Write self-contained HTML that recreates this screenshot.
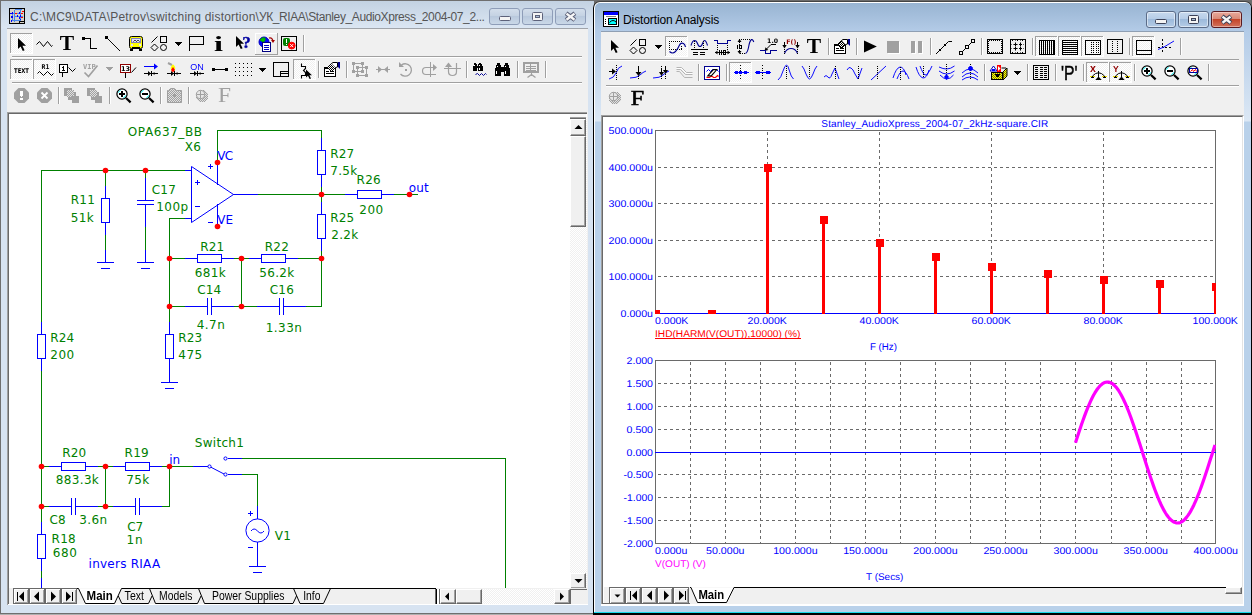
<!DOCTYPE html><html><head><meta charset="utf-8"><title>MC9</title><style>
html,body{margin:0;padding:0}
body{width:1252px;height:615px;position:relative;overflow:hidden;background:#6c6c6c;font-family:"Liberation Sans",sans-serif}
div,svg{position:absolute;box-sizing:border-box}
svg{left:0;top:0;shape-rendering:crispEdges}
.tt{font-size:12px;white-space:nowrap;line-height:16px}
.cb{border:1px solid #8a98b0;border-radius:3px}
.tab{font-size:12px;white-space:nowrap;line-height:14px;color:#000;letter-spacing:-0.35px}
.hatch{background-image:conic-gradient(#fff 25%,#f0f0f0 0 50%,#fff 0 75%,#f0f0f0 0);background-size:2px 2px}
.sbb{background:#f0f0f0;border:1px solid;border-color:#fff #696969 #696969 #fff;box-shadow:inset -1px -1px 0 #a0a0a0}
</style></head><body>
<div style="left:0;top:0;width:594px;height:614px;background:#6f6f6f"></div>
<div style="left:1px;top:1px;width:593px;height:612px;background:linear-gradient(#c3d2e2,#dbe6f3 27px,#d7e3f1 28px)"></div>
<div style="left:0;top:614px;width:594px;height:1px;background:#b0b0b0"></div>
<div class="tt" style="left:30px;top:8.5px;color:#555;letter-spacing:-0.09px" id="lt"><span style="letter-spacing:0.22px">C:\MC9\DATA\Petrov\switching distortion\</span><span style="letter-spacing:-0.44px">УК_RIAA\</span><span style="letter-spacing:-0.39px">Stanley_AudioXpress_2004-07_2...</span></div>
<div class="cb" style="left:489px;top:8px;width:31px;height:17px;border-color:#8e9db8;background:linear-gradient(#d3deeb,#c3d1e2 50%,#b9c9dd 50%,#cad8e8)"></div>
<div class="cb" style="left:522px;top:8px;width:31px;height:17px;border-color:#8e9db8;background:linear-gradient(#d3deeb,#c3d1e2 50%,#b9c9dd 50%,#cad8e8)"></div>
<div class="cb" style="left:555px;top:8px;width:31px;height:17px;border-color:#8e9db8;background:linear-gradient(#d3deeb,#c3d1e2 50%,#b9c9dd 50%,#cad8e8)"></div>
<div style="left:7px;top:28px;width:581px;height:577px;background:#f0f0f0;border-top:1px solid #a0a4aa"></div>
<div style="left:7px;top:604px;width:581px;height:1px;background:#fff"></div>
<div style="left:7px;top:112px;width:580px;height:493px;background:#fff;border-left:1px solid #a0a0a0;border-top:1px solid #a0a0a0"></div>
<div style="left:8px;top:113px;width:579px;height:491px;background:#fff;border-left:1px solid #696969;border-top:1px solid #696969"></div>
<div style="left:593px;top:1px;width:659px;height:614px;background:linear-gradient(#4a4a4a,#000 6px);border-radius:7px 7px 0 0"></div>
<div style="left:594px;top:2px;width:657px;height:611px;background:#fff;border-radius:6px 6px 0 0"></div>
<div style="left:595px;top:3px;width:656px;height:610px;background:linear-gradient(#98b4d2 0px,#b3cbe7 28px,#dce8f5 118px,#b9d1ea 119px);border-radius:5px 5px 0 0"></div>
<div style="left:594px;top:612px;width:657px;height:1px;background:#19d9ea"></div>
<div class="tt" style="left:623px;top:12px;color:#000;letter-spacing:-0.1px" id="rt">Distortion Analysis</div>
<div class="cb" style="left:1146px;top:11px;width:30px;height:17px;border-color:#5b6c88;background:linear-gradient(#c7d9ee,#b4cbe6 50%,#9dbadb 50%,#b5cce6);box-shadow:inset 0 0 0 1px rgba(255,255,255,.5)"></div>
<div class="cb" style="left:1178px;top:11px;width:31px;height:17px;border-color:#5b6c88;background:linear-gradient(#c7d9ee,#b4cbe6 50%,#9dbadb 50%,#b5cce6);box-shadow:inset 0 0 0 1px rgba(255,255,255,.5)"></div>
<div class="cb" style="left:1211px;top:11px;width:31px;height:17px;border-color:#5a1a20;background:linear-gradient(#e9a99c,#d98a78 45%,#c4452a 50%,#d2725c);box-shadow:inset 0 0 0 1px rgba(255,255,255,.4)"></div>
<div style="left:601px;top:31px;width:643px;height:575px;background:#f0f0f0;border-top:1px solid #8f9fb3"></div>
<div style="left:601px;top:605px;width:643px;height:1px;background:#fff"></div>
<div style="left:601px;top:115px;width:643px;height:491px;background:#fff;border-left:1px solid #a0a0a0;border-top:1px solid #a0a0a0;border-right:1px solid #fff"></div>
<div style="left:602px;top:116px;width:641px;height:489px;background:#fff;border-left:1px solid #696969;border-top:1px solid #696969;border-right:1px solid #e3e3e3"></div>
<svg width="1252" height="615" style="font-family:'DejaVu Sans',sans-serif;font-size:12px">
<rect x="217" y="130" width="105" height="1" fill="#008000"/>
<rect x="217" y="130" width="1" height="33" fill="#008000"/>
<rect x="321" y="130" width="1" height="9" fill="#008000"/>
<rect x="321" y="186" width="1" height="17" fill="#008000"/>
<rect x="321" y="250" width="1" height="9" fill="#008000"/>
<rect x="257" y="194" width="89" height="1" fill="#008000"/>
<rect x="393" y="194" width="25" height="1" fill="#008000"/>
<rect x="41" y="170" width="145" height="1" fill="#008000"/>
<rect x="41" y="170" width="1" height="153" fill="#008000"/>
<rect x="41" y="370" width="1" height="153" fill="#008000"/>
<rect x="41" y="570" width="1" height="9" fill="#008000"/>
<rect x="105" y="170" width="1" height="17" fill="#008000"/>
<rect x="105" y="234" width="1" height="17" fill="#008000"/>
<rect x="145" y="170" width="1" height="9" fill="#008000"/>
<rect x="145" y="226" width="1" height="25" fill="#008000"/>
<rect x="169" y="218" width="17" height="1" fill="#008000"/>
<rect x="169" y="218" width="1" height="105" fill="#008000"/>
<rect x="169" y="258" width="17" height="1" fill="#008000"/>
<rect x="233" y="258" width="17" height="1" fill="#008000"/>
<rect x="297" y="258" width="25" height="1" fill="#008000"/>
<rect x="169" y="306" width="17" height="1" fill="#008000"/>
<rect x="233" y="306" width="25" height="1" fill="#008000"/>
<rect x="305" y="306" width="17" height="1" fill="#008000"/>
<rect x="241" y="258" width="1" height="49" fill="#008000"/>
<rect x="321" y="258" width="1" height="49" fill="#008000"/>
<rect x="41" y="466" width="9" height="1" fill="#008000"/>
<rect x="97" y="466" width="17" height="1" fill="#008000"/>
<rect x="161" y="466" width="33" height="1" fill="#008000"/>
<rect x="41" y="506" width="9" height="1" fill="#008000"/>
<rect x="97" y="506" width="17" height="1" fill="#008000"/>
<rect x="161" y="506" width="9" height="1" fill="#008000"/>
<rect x="105" y="466" width="1" height="41" fill="#008000"/>
<rect x="169" y="466" width="1" height="41" fill="#008000"/>
<rect x="241" y="458" width="265" height="1" fill="#008000"/>
<rect x="505" y="458" width="1" height="130" fill="#008000"/>
<rect x="241" y="474" width="17" height="1" fill="#008000"/>
<rect x="257" y="474" width="1" height="33" fill="#008000"/>
<rect x="217" y="162" width="1" height="23" fill="#0000ff"/>
<rect x="217" y="204" width="1" height="23" fill="#0000ff"/>
<rect x="185" y="170" width="7" height="1" fill="#0000ff"/>
<rect x="185" y="218" width="7" height="1" fill="#0000ff"/>
<path d="M191.5 166.5 L191.5 222.5 L233.5 194.5 Z" fill="none" stroke="#0000ff" stroke-width="1" shape-rendering="auto"/>
<rect x="233" y="194" width="25" height="1" fill="#0000ff"/>
<rect x="321" y="138" width="1" height="13" fill="#0000ff"/>
<rect x="317.5" y="150.5" width="8" height="24" fill="none" stroke="#0000ff" stroke-width="1"/>
<rect x="321" y="174" width="1" height="13" fill="#0000ff"/>
<rect x="321" y="202" width="1" height="13" fill="#0000ff"/>
<rect x="317.5" y="214.5" width="8" height="24" fill="none" stroke="#0000ff" stroke-width="1"/>
<rect x="321" y="238" width="1" height="13" fill="#0000ff"/>
<rect x="345" y="194" width="13" height="1" fill="#0000ff"/>
<rect x="357.5" y="190.5" width="24" height="8" fill="none" stroke="#0000ff" stroke-width="1"/>
<rect x="381" y="194" width="13" height="1" fill="#0000ff"/>
<rect x="41" y="322" width="1" height="13" fill="#0000ff"/>
<rect x="37.5" y="334.5" width="8" height="24" fill="none" stroke="#0000ff" stroke-width="1"/>
<rect x="41" y="358" width="1" height="13" fill="#0000ff"/>
<rect x="41" y="522" width="1" height="13" fill="#0000ff"/>
<rect x="37.5" y="534.5" width="8" height="24" fill="none" stroke="#0000ff" stroke-width="1"/>
<rect x="41" y="558" width="1" height="13" fill="#0000ff"/>
<rect x="41" y="578" width="1" height="10" fill="#0000ff"/>
<rect x="105" y="186" width="1" height="13" fill="#0000ff"/>
<rect x="101.5" y="198.5" width="8" height="24" fill="none" stroke="#0000ff" stroke-width="1"/>
<rect x="105" y="222" width="1" height="13" fill="#0000ff"/>
<rect x="105" y="250" width="1" height="13" fill="#0000ff"/>
<rect x="97" y="262" width="17" height="1" fill="#0000ff"/>
<rect x="101" y="268" width="9" height="1" fill="#0000ff"/>
<rect x="145" y="178" width="1" height="23" fill="#0000ff"/>
<rect x="137" y="200" width="17" height="1" fill="#0000ff"/>
<rect x="137" y="204" width="17" height="1" fill="#0000ff"/>
<rect x="145" y="204" width="1" height="23" fill="#0000ff"/>
<rect x="145" y="250" width="1" height="13" fill="#0000ff"/>
<rect x="137" y="262" width="17" height="1" fill="#0000ff"/>
<rect x="141" y="268" width="9" height="1" fill="#0000ff"/>
<rect x="169" y="322" width="1" height="13" fill="#0000ff"/>
<rect x="165.5" y="334.5" width="8" height="24" fill="none" stroke="#0000ff" stroke-width="1"/>
<rect x="169" y="358" width="1" height="13" fill="#0000ff"/>
<rect x="169" y="370" width="1" height="13" fill="#0000ff"/>
<rect x="161" y="382" width="17" height="1" fill="#0000ff"/>
<rect x="165" y="388" width="9" height="1" fill="#0000ff"/>
<rect x="185" y="258" width="13" height="1" fill="#0000ff"/>
<rect x="197.5" y="254.5" width="24" height="8" fill="none" stroke="#0000ff" stroke-width="1"/>
<rect x="221" y="258" width="13" height="1" fill="#0000ff"/>
<rect x="249" y="258" width="13" height="1" fill="#0000ff"/>
<rect x="261.5" y="254.5" width="24" height="8" fill="none" stroke="#0000ff" stroke-width="1"/>
<rect x="285" y="258" width="13" height="1" fill="#0000ff"/>
<rect x="185" y="306" width="23" height="1" fill="#0000ff"/>
<rect x="207" y="298" width="1" height="17" fill="#0000ff"/>
<rect x="211" y="298" width="1" height="17" fill="#0000ff"/>
<rect x="211" y="306" width="23" height="1" fill="#0000ff"/>
<rect x="257" y="306" width="23" height="1" fill="#0000ff"/>
<rect x="279" y="298" width="1" height="17" fill="#0000ff"/>
<rect x="283" y="298" width="1" height="17" fill="#0000ff"/>
<rect x="283" y="306" width="23" height="1" fill="#0000ff"/>
<rect x="49" y="466" width="13" height="1" fill="#0000ff"/>
<rect x="61.5" y="462.5" width="24" height="8" fill="none" stroke="#0000ff" stroke-width="1"/>
<rect x="85" y="466" width="13" height="1" fill="#0000ff"/>
<rect x="113" y="466" width="13" height="1" fill="#0000ff"/>
<rect x="125.5" y="462.5" width="24" height="8" fill="none" stroke="#0000ff" stroke-width="1"/>
<rect x="149" y="466" width="13" height="1" fill="#0000ff"/>
<rect x="49" y="506" width="23" height="1" fill="#0000ff"/>
<rect x="71" y="498" width="1" height="17" fill="#0000ff"/>
<rect x="75" y="498" width="1" height="17" fill="#0000ff"/>
<rect x="75" y="506" width="23" height="1" fill="#0000ff"/>
<rect x="113" y="506" width="23" height="1" fill="#0000ff"/>
<rect x="135" y="498" width="1" height="17" fill="#0000ff"/>
<rect x="139" y="498" width="1" height="17" fill="#0000ff"/>
<rect x="139" y="506" width="23" height="1" fill="#0000ff"/>
<rect x="193" y="466" width="15" height="1" fill="#0000ff"/>
<g shape-rendering="auto" fill="#fff" stroke="#0000ff" stroke-width="1"><path d="M210.5 467 L224 474" fill="none"/><circle cx="209.5" cy="466.5" r="1.6"/><circle cx="225.5" cy="458.5" r="1.6"/><circle cx="225.5" cy="474.5" r="1.6"/></g>
<rect x="228" y="458" width="14" height="1" fill="#0000ff"/>
<rect x="228" y="474" width="14" height="1" fill="#0000ff"/>
<rect x="257" y="506" width="1" height="13" fill="#0000ff"/>
<rect x="257" y="542" width="1" height="25" fill="#0000ff"/>
<rect x="249" y="566" width="17" height="1" fill="#0000ff"/>
<rect x="253" y="572" width="9" height="1" fill="#0000ff"/>
<g shape-rendering="auto" fill="none" stroke="#0000ff" stroke-width="1"><circle cx="257.5" cy="530.5" r="11.6"/><path d="M251 531 q3 -4 6.5 0 t6.5 0"/></g>
<rect x="208" y="166" width="5" height="1" fill="#0000ff"/>
<rect x="210" y="164" width="1" height="5" fill="#0000ff"/>
<rect x="195" y="182" width="5" height="1" fill="#0000ff"/>
<rect x="197" y="180" width="1" height="5" fill="#0000ff"/>
<rect x="195" y="206" width="5" height="1" fill="#0000ff"/>
<rect x="208" y="222" width="5" height="1" fill="#0000ff"/>
<rect x="248" y="513" width="5" height="1" fill="#0000ff"/>
<rect x="250" y="511" width="1" height="5" fill="#0000ff"/>
<rect x="248" y="547" width="5" height="1" fill="#0000ff"/>
<circle cx="105.5" cy="170.5" r="2.8" fill="#ff0000" shape-rendering="auto"/>
<circle cx="145.5" cy="170.5" r="2.8" fill="#ff0000" shape-rendering="auto"/>
<circle cx="217.5" cy="162.5" r="2.8" fill="#ff0000" shape-rendering="auto"/>
<circle cx="217.5" cy="226.5" r="2.8" fill="#ff0000" shape-rendering="auto"/>
<circle cx="321.5" cy="194.5" r="2.8" fill="#ff0000" shape-rendering="auto"/>
<circle cx="409.5" cy="194.5" r="2.8" fill="#ff0000" shape-rendering="auto"/>
<circle cx="169.5" cy="258.5" r="2.8" fill="#ff0000" shape-rendering="auto"/>
<circle cx="241.5" cy="258.5" r="2.8" fill="#ff0000" shape-rendering="auto"/>
<circle cx="321.5" cy="258.5" r="2.8" fill="#ff0000" shape-rendering="auto"/>
<circle cx="169.5" cy="306.5" r="2.8" fill="#ff0000" shape-rendering="auto"/>
<circle cx="241.5" cy="306.5" r="2.8" fill="#ff0000" shape-rendering="auto"/>
<circle cx="41.5" cy="466.5" r="2.8" fill="#ff0000" shape-rendering="auto"/>
<circle cx="105.5" cy="466.5" r="2.8" fill="#ff0000" shape-rendering="auto"/>
<circle cx="169.5" cy="466.5" r="2.8" fill="#ff0000" shape-rendering="auto"/>
<circle cx="41.5" cy="506.5" r="2.8" fill="#ff0000" shape-rendering="auto"/>
<circle cx="105.5" cy="506.5" r="2.8" fill="#ff0000" shape-rendering="auto"/>
<text x="127.8" y="136" fill="#008000" textLength="74.2" lengthAdjust="spacing">OPA637_BB</text>
<text x="184.79999999999998" y="151" fill="#008000" textLength="16" lengthAdjust="spacing">X6</text>
<text x="70.8" y="204" fill="#008000" textLength="24" lengthAdjust="spacing">R11</text>
<text x="70.8" y="222" fill="#008000" textLength="23" lengthAdjust="spacing">51k</text>
<text x="151.79999999999998" y="194" fill="#008000" textLength="24" lengthAdjust="spacing">C17</text>
<text x="156.2" y="211" fill="#008000" textLength="32" lengthAdjust="spacing">100p</text>
<text x="330.2" y="158" fill="#008000" textLength="24" lengthAdjust="spacing">R27</text>
<text x="330.2" y="175" fill="#008000" textLength="27" lengthAdjust="spacing">7.5k</text>
<text x="356.59999999999997" y="184" fill="#008000" textLength="24" lengthAdjust="spacing">R26</text>
<text x="359.2" y="214" fill="#008000" textLength="24" lengthAdjust="spacing">200</text>
<text x="330.2" y="222" fill="#008000" textLength="24" lengthAdjust="spacing">R25</text>
<text x="331.2" y="239" fill="#008000" textLength="27" lengthAdjust="spacing">2.2k</text>
<text x="200.2" y="251" fill="#008000" textLength="24" lengthAdjust="spacing">R21</text>
<text x="194.79999999999998" y="277" fill="#008000" textLength="31" lengthAdjust="spacing">681k</text>
<text x="264.8" y="251" fill="#008000" textLength="24" lengthAdjust="spacing">R22</text>
<text x="259.2" y="277" fill="#008000" textLength="35" lengthAdjust="spacing">56.2k</text>
<text x="197.2" y="294" fill="#008000" textLength="24" lengthAdjust="spacing">C14</text>
<text x="196.79999999999998" y="329" fill="#008000" textLength="28" lengthAdjust="spacing">4.7n</text>
<text x="269.8" y="294" fill="#008000" textLength="24" lengthAdjust="spacing">C16</text>
<text x="265.8" y="332" fill="#008000" textLength="36" lengthAdjust="spacing">1.33n</text>
<text x="50.2" y="342" fill="#008000" textLength="24" lengthAdjust="spacing">R24</text>
<text x="50.2" y="359" fill="#008000" textLength="24" lengthAdjust="spacing">200</text>
<text x="178.2" y="342" fill="#008000" textLength="24" lengthAdjust="spacing">R23</text>
<text x="178.2" y="359" fill="#008000" textLength="24" lengthAdjust="spacing">475</text>
<text x="194.79999999999998" y="447" fill="#008000" textLength="49" lengthAdjust="spacing">Switch1</text>
<text x="62.2" y="457" fill="#008000" textLength="24" lengthAdjust="spacing">R20</text>
<text x="55.800000000000004" y="484" fill="#008000" textLength="43" lengthAdjust="spacing">883.3k</text>
<text x="124.60000000000001" y="457" fill="#008000" textLength="24" lengthAdjust="spacing">R19</text>
<text x="126.2" y="484" fill="#008000" textLength="23" lengthAdjust="spacing">75k</text>
<text x="49.6" y="524" fill="#008000" textLength="16" lengthAdjust="spacing">C8</text>
<text x="79.2" y="524" fill="#008000" textLength="28" lengthAdjust="spacing">3.6n</text>
<text x="127.2" y="531" fill="#008000" textLength="16" lengthAdjust="spacing">C7</text>
<text x="126.60000000000001" y="544" fill="#008000" textLength="16" lengthAdjust="spacing">1n</text>
<text x="51.6" y="543" fill="#008000" textLength="24" lengthAdjust="spacing">R18</text>
<text x="52.800000000000004" y="557" fill="#008000" textLength="24" lengthAdjust="spacing">680</text>
<text x="274.8" y="540" fill="#008000" textLength="16" lengthAdjust="spacing">V1</text>
<text x="217.2" y="160" fill="#0000ff" textLength="16" lengthAdjust="spacing">VC</text>
<text x="217.2" y="224" fill="#0000ff" textLength="16" lengthAdjust="spacing">VE</text>
<text x="408.8" y="192" fill="#0000ff" textLength="20" lengthAdjust="spacing">out</text>
<text x="169.2" y="464" fill="#0000ff" textLength="11" lengthAdjust="spacing">in</text>
<text x="88.60000000000001" y="568" fill="#0000ff" textLength="71.5" lengthAdjust="spacing">invers RIAA</text>
</svg>
<svg width="1252" height="615" style="font-family:'Liberation Sans',sans-serif;font-size:9.8px;text-rendering:geometricPrecision">
<path d="M658 167.5 H1215" stroke="#6a6a6a" stroke-width="1" stroke-dasharray="3 3" fill="none"/>
<path d="M658 203.5 H1215" stroke="#6a6a6a" stroke-width="1" stroke-dasharray="3 3" fill="none"/>
<path d="M658 240.5 H1215" stroke="#6a6a6a" stroke-width="1" stroke-dasharray="3 3" fill="none"/>
<path d="M658 276.5 H1215" stroke="#6a6a6a" stroke-width="1" stroke-dasharray="3 3" fill="none"/>
<path d="M767.5 132 V313" stroke="#6a6a6a" stroke-width="1" stroke-dasharray="3 3" fill="none"/>
<path d="M879.5 132 V313" stroke="#6a6a6a" stroke-width="1" stroke-dasharray="3 3" fill="none"/>
<path d="M991.5 132 V313" stroke="#6a6a6a" stroke-width="1" stroke-dasharray="3 3" fill="none"/>
<path d="M1103.5 132 V313" stroke="#6a6a6a" stroke-width="1" stroke-dasharray="3 3" fill="none"/>
<rect x="655" y="130" width="561" height="1" fill="#6a6a6a"/>
<rect x="655" y="130" width="1" height="184" fill="#6a6a6a"/>
<rect x="1215" y="130" width="1" height="184" fill="#6a6a6a"/>
<rect x="655" y="313" width="561" height="1" fill="#0000ff"/>
<clipPath id="c1"><rect x="655" y="130" width="561" height="184"/></clipPath><g clip-path="url(#c1)" fill="#ff0000">
<rect x="652" y="310" width="8" height="8"/><rect x="654" y="314" width="3" height="0"/>
<rect x="708" y="310" width="8" height="8"/><rect x="710" y="314" width="3" height="0"/>
<rect x="764" y="164" width="8" height="8"/><rect x="766" y="168" width="3" height="146"/>
<rect x="820" y="216" width="8" height="8"/><rect x="822" y="220" width="3" height="94"/>
<rect x="876" y="239" width="8" height="8"/><rect x="878" y="243" width="3" height="71"/>
<rect x="932" y="253" width="8" height="8"/><rect x="934" y="257" width="3" height="57"/>
<rect x="988" y="263" width="8" height="8"/><rect x="990" y="267" width="3" height="47"/>
<rect x="1044" y="270" width="8" height="8"/><rect x="1046" y="274" width="3" height="40"/>
<rect x="1100" y="275.5" width="8" height="8"/><rect x="1102" y="279.5" width="3" height="34.5"/>
<rect x="1156" y="279.5" width="8" height="8"/><rect x="1158" y="283.5" width="3" height="30.5"/>
<rect x="1212" y="282.5" width="8" height="8"/><rect x="1214" y="286.5" width="3" height="27.5"/>
</g>
<text x="608.6" y="133.6" fill="#0000ff" textLength="44.4" lengthAdjust="spacingAndGlyphs">500.000u</text>
<text x="608.6" y="170.6" fill="#0000ff" textLength="44.4" lengthAdjust="spacingAndGlyphs">400.000u</text>
<text x="608.6" y="206.6" fill="#0000ff" textLength="44.4" lengthAdjust="spacingAndGlyphs">300.000u</text>
<text x="608.6" y="243.6" fill="#0000ff" textLength="44.4" lengthAdjust="spacingAndGlyphs">200.000u</text>
<text x="608.6" y="279.6" fill="#0000ff" textLength="44.4" lengthAdjust="spacingAndGlyphs">100.000u</text>
<text x="620.6" y="316.6" fill="#0000ff" textLength="32.4" lengthAdjust="spacingAndGlyphs">0.000u</text>
<text x="655.0" y="324" fill="#0000ff" textLength="33.4" lengthAdjust="spacingAndGlyphs">0.000K</text>
<text x="747.5" y="324" fill="#0000ff" textLength="39.4" lengthAdjust="spacingAndGlyphs">20.000K</text>
<text x="859.5" y="324" fill="#0000ff" textLength="39.4" lengthAdjust="spacingAndGlyphs">40.000K</text>
<text x="971.5" y="324" fill="#0000ff" textLength="39.4" lengthAdjust="spacingAndGlyphs">60.000K</text>
<text x="1083.5" y="324" fill="#0000ff" textLength="39.4" lengthAdjust="spacingAndGlyphs">80.000K</text>
<text x="1192.5" y="324" fill="#0000ff" textLength="45.4" lengthAdjust="spacingAndGlyphs">100.000K</text>
<text x="655.0" y="337" fill="#ff0000" textLength="145.4" lengthAdjust="spacingAndGlyphs">IHD(HARM(V(OUT)),10000) (%)</text>
<rect x="655" y="338" width="146" height="1" fill="#ff0000"/>
<text x="870.0" y="349.8" fill="#0000ff" textLength="26.9" lengthAdjust="spacingAndGlyphs">F (Hz)</text>
<text x="934.8" y="127.2" fill="#0000ff" text-anchor="middle" font-size="10px" textLength="227" lengthAdjust="spacing">Stanley_AudioXpress_2004-07_2kHz-square.CIR</text>
<path d="M658 383.5 H1215" stroke="#6a6a6a" stroke-width="1" stroke-dasharray="3 3" fill="none"/>
<path d="M658 406.5 H1215" stroke="#6a6a6a" stroke-width="1" stroke-dasharray="3 3" fill="none"/>
<path d="M658 429.5 H1215" stroke="#6a6a6a" stroke-width="1" stroke-dasharray="3 3" fill="none"/>
<path d="M658 474.5 H1215" stroke="#6a6a6a" stroke-width="1" stroke-dasharray="3 3" fill="none"/>
<path d="M658 497.5 H1215" stroke="#6a6a6a" stroke-width="1" stroke-dasharray="3 3" fill="none"/>
<path d="M658 520.5 H1215" stroke="#6a6a6a" stroke-width="1" stroke-dasharray="3 3" fill="none"/>
<path d="M690.5 362 V543" stroke="#6a6a6a" stroke-width="1" stroke-dasharray="3 3" fill="none"/>
<path d="M725.5 362 V543" stroke="#6a6a6a" stroke-width="1" stroke-dasharray="3 3" fill="none"/>
<path d="M760.5 362 V543" stroke="#6a6a6a" stroke-width="1" stroke-dasharray="3 3" fill="none"/>
<path d="M795.5 362 V543" stroke="#6a6a6a" stroke-width="1" stroke-dasharray="3 3" fill="none"/>
<path d="M830.5 362 V543" stroke="#6a6a6a" stroke-width="1" stroke-dasharray="3 3" fill="none"/>
<path d="M865.5 362 V543" stroke="#6a6a6a" stroke-width="1" stroke-dasharray="3 3" fill="none"/>
<path d="M900.5 362 V543" stroke="#6a6a6a" stroke-width="1" stroke-dasharray="3 3" fill="none"/>
<path d="M935.5 362 V543" stroke="#6a6a6a" stroke-width="1" stroke-dasharray="3 3" fill="none"/>
<path d="M970.5 362 V543" stroke="#6a6a6a" stroke-width="1" stroke-dasharray="3 3" fill="none"/>
<path d="M1005.5 362 V543" stroke="#6a6a6a" stroke-width="1" stroke-dasharray="3 3" fill="none"/>
<path d="M1040.5 362 V543" stroke="#6a6a6a" stroke-width="1" stroke-dasharray="3 3" fill="none"/>
<path d="M1075.5 362 V543" stroke="#6a6a6a" stroke-width="1" stroke-dasharray="3 3" fill="none"/>
<path d="M1111.5 362 V543" stroke="#6a6a6a" stroke-width="1" stroke-dasharray="3 3" fill="none"/>
<path d="M1146.5 362 V543" stroke="#6a6a6a" stroke-width="1" stroke-dasharray="3 3" fill="none"/>
<path d="M1181.5 362 V543" stroke="#6a6a6a" stroke-width="1" stroke-dasharray="3 3" fill="none"/>
<rect x="655" y="360" width="561" height="1" fill="#6a6a6a"/>
<rect x="655" y="360" width="1" height="184" fill="#6a6a6a"/>
<rect x="1215" y="360" width="1" height="184" fill="#6a6a6a"/>
<rect x="655" y="543" width="561" height="1" fill="#6a6a6a"/>
<rect x="655" y="452" width="561" height="1" fill="#0000ff"/>
<clipPath id="c2"><rect x="655" y="360" width="561" height="184"/></clipPath><polyline clip-path="url(#c2)" points="1075.5,442.7 1077.0,438.1 1078.5,433.5 1080.0,428.9 1081.5,424.5 1083.0,420.3 1084.5,416.1 1086.0,412.1 1087.5,408.4 1089.0,404.8 1090.5,401.4 1092.0,398.2 1093.5,395.3 1095.0,392.7 1096.5,390.3 1098.0,388.2 1099.5,386.4 1101.0,384.9 1102.5,383.7 1104.0,382.8 1105.5,382.3 1107.0,382.0 1108.5,382.1 1110.0,382.5 1111.5,383.2 1113.0,384.2 1114.5,385.5 1116.0,387.1 1117.5,389.0 1119.0,391.2 1120.5,393.7 1122.0,396.5 1123.5,399.5 1125.0,402.7 1126.5,406.2 1128.0,409.8 1129.5,413.7 1131.0,417.8 1132.5,422.0 1134.0,426.3 1135.5,430.7 1137.0,435.3 1138.5,439.9 1140.0,444.6 1141.5,449.3 1143.0,454.1 1144.5,458.8 1146.0,463.5 1147.5,468.2 1149.0,472.7 1150.5,477.2 1152.0,481.6 1153.5,485.9 1155.0,490.0 1156.5,493.9 1158.0,497.6 1159.5,501.2 1161.0,504.5 1162.5,507.6 1164.0,510.4 1165.5,513.0 1167.0,515.3 1168.5,517.3 1170.0,519.0 1171.5,520.4 1173.0,521.5 1174.5,522.3 1176.0,522.8 1177.5,523.0 1179.0,522.9 1180.5,522.4 1182.0,521.6 1183.5,520.5 1185.0,519.1 1186.5,517.4 1188.0,515.4 1189.5,513.1 1191.0,510.6 1192.5,507.8 1194.0,504.7 1195.5,501.4 1197.0,497.9 1198.5,494.1 1200.0,490.2 1201.5,486.1 1203.0,481.9 1204.5,477.5 1206.0,473.1 1207.5,468.5 1209.0,463.8 1210.5,459.1 1212.0,454.4 1213.5,449.7 1215.0,444.9" fill="none" stroke="#ff00ff" stroke-width="3.2" stroke-linejoin="round" shape-rendering="auto"/>
<text x="626.6" y="363.6" fill="#0000ff" textLength="26.4" lengthAdjust="spacingAndGlyphs">2.000</text>
<text x="626.6" y="386.6" fill="#0000ff" textLength="26.4" lengthAdjust="spacingAndGlyphs">1.500</text>
<text x="626.6" y="409.6" fill="#0000ff" textLength="26.4" lengthAdjust="spacingAndGlyphs">1.000</text>
<text x="626.6" y="432.6" fill="#0000ff" textLength="26.4" lengthAdjust="spacingAndGlyphs">0.500</text>
<text x="626.6" y="455.6" fill="#0000ff" textLength="26.4" lengthAdjust="spacingAndGlyphs">0.000</text>
<text x="623.6" y="477.6" fill="#0000ff" textLength="29.4" lengthAdjust="spacingAndGlyphs">-0.500</text>
<text x="623.6" y="500.6" fill="#0000ff" textLength="29.4" lengthAdjust="spacingAndGlyphs">-1.000</text>
<text x="623.6" y="523.6" fill="#0000ff" textLength="29.4" lengthAdjust="spacingAndGlyphs">-1.500</text>
<text x="623.6" y="546.6" fill="#0000ff" textLength="29.4" lengthAdjust="spacingAndGlyphs">-2.000</text>
<text x="655.0" y="553.5" fill="#0000ff" textLength="32.4" lengthAdjust="spacingAndGlyphs">0.000u</text>
<text x="706.1" y="553.5" fill="#0000ff" textLength="38.4" lengthAdjust="spacingAndGlyphs">50.000u</text>
<text x="773.2" y="553.5" fill="#0000ff" textLength="44.4" lengthAdjust="spacingAndGlyphs">100.000u</text>
<text x="843.2" y="553.5" fill="#0000ff" textLength="44.4" lengthAdjust="spacingAndGlyphs">150.000u</text>
<text x="913.3" y="553.5" fill="#0000ff" textLength="44.4" lengthAdjust="spacingAndGlyphs">200.000u</text>
<text x="983.4" y="553.5" fill="#0000ff" textLength="44.4" lengthAdjust="spacingAndGlyphs">250.000u</text>
<text x="1053.5" y="553.5" fill="#0000ff" textLength="44.4" lengthAdjust="spacingAndGlyphs">300.000u</text>
<text x="1123.6" y="553.5" fill="#0000ff" textLength="44.4" lengthAdjust="spacingAndGlyphs">350.000u</text>
<text x="1193.6" y="553.5" fill="#0000ff" textLength="44.4" lengthAdjust="spacingAndGlyphs">400.000u</text>
<text x="655.0" y="567" fill="#ff00ff" textLength="50.9" lengthAdjust="spacingAndGlyphs">V(OUT) (V)</text>
<text x="866.0" y="579.6" fill="#0000ff" textLength="37.4" lengthAdjust="spacingAndGlyphs">T (Secs)</text>
</svg>
<div class="hatch" style="left:570px;top:117px;width:17px;height:472px"></div>
<div style="left:570px;top:114px;width:16px;height:5px;background:#f8f8f8;border-bottom:1px solid #696969;box-shadow:inset 0 -1px 0 #a0a0a0"></div>
<div class="sbb" style="left:570px;top:119px;width:16px;height:17px"></div>
<div class="sbb" style="left:570px;top:136px;width:16px;height:91px"></div>
<div class="sbb" style="left:570px;top:573px;width:16px;height:16px"></div>
<div style="left:9px;top:588px;width:578px;height:16px;background:#f0f0f0"></div>
<div class="hatch" style="left:440px;top:589px;width:131px;height:15px"></div>
<div style="left:570px;top:589px;width:17px;height:15px;background:#f0f0f0;border-top:1px solid #696969;border-left:1px solid #696969"></div>
<div class="sbb" style="left:440px;top:589px;width:16px;height:15px"></div>
<div class="sbb" style="left:456px;top:589px;width:26px;height:15px"></div>
<div class="sbb" style="left:554px;top:589px;width:16px;height:15px"></div>
<div style="left:13px;top:588px;width:16px;height:16px;background:#f0f0f0;border:1px solid;border-color:#696969 #696969 #696969 #696969;box-shadow:inset 1px 1px 0 #fff,inset -1px -1px 0 #a0a0a0"></div>
<div style="left:29px;top:588px;width:16px;height:16px;background:#f0f0f0;border:1px solid;border-color:#696969 #696969 #696969 #696969;box-shadow:inset 1px 1px 0 #fff,inset -1px -1px 0 #a0a0a0"></div>
<div style="left:45px;top:588px;width:16px;height:16px;background:#f0f0f0;border:1px solid;border-color:#696969 #696969 #696969 #696969;box-shadow:inset 1px 1px 0 #fff,inset -1px -1px 0 #a0a0a0"></div>
<div style="left:61px;top:588px;width:16px;height:16px;background:#f0f0f0;border:1px solid;border-color:#696969 #696969 #696969 #696969;box-shadow:inset 1px 1px 0 #fff,inset -1px -1px 0 #a0a0a0"></div>
<div style="left:603px;top:587px;width:640px;height:17px;background:#f0f0f0;border-left:1px solid #fff"></div>
<div style="left:601px;top:604px;width:643px;height:2px;background:#fff"></div>
<div style="left:603px;top:603px;width:87px;height:1px;background:#696969"></div>
<div style="left:609px;top:587px;width:16px;height:17px;background:#f0f0f0;border:1px solid #696969;box-shadow:inset 1px 1px 0 #fff,inset -1px -1px 0 #a0a0a0"></div>
<div style="left:625px;top:587px;width:16px;height:17px;background:#f0f0f0;border:1px solid #696969;box-shadow:inset 1px 1px 0 #fff,inset -1px -1px 0 #a0a0a0"></div>
<div style="left:641px;top:587px;width:16px;height:17px;background:#f0f0f0;border:1px solid #696969;box-shadow:inset 1px 1px 0 #fff,inset -1px -1px 0 #a0a0a0"></div>
<div style="left:657px;top:587px;width:16px;height:17px;background:#f0f0f0;border:1px solid #696969;box-shadow:inset 1px 1px 0 #fff,inset -1px -1px 0 #a0a0a0"></div>
<div style="left:673px;top:587px;width:16px;height:17px;background:#f0f0f0;border:1px solid #696969;box-shadow:inset 1px 1px 0 #fff,inset -1px -1px 0 #a0a0a0"></div>
<div class="sbb" style="left:1225px;top:587px;width:17px;height:7px"></div>
<svg width="1252" height="615" style="will-change:transform">
<g shape-rendering="auto" stroke="#000" stroke-width="1" fill="none">
<path d="M77 588.5 H78.5 L85.5 603.5 H114.5 L121.5 588.5" fill="#fff"/>
<path d="M121.5 588.5 H436"/>
<path d="M118.3 596 L121.8 603.5 H148.5 L152 596 M149.5 588.5 L155.5 603.5 H197.5 L201 596 M198.5 588.5 L204.5 603.5 H293 L296.5 596 M293.5 588.5 L300 603.5 H323.5 L330.5 588.5"/>
<path d="M690 587.5 H691 L697.5 602.5 H726.5 L734 587.5" fill="#fff"/><path d="M734 587.5 H1226"/>
</g>
<rect x="435" y="589" width="1" height="15" fill="#696969"/><rect x="436" y="589" width="1" height="15" fill="#000"/><rect x="437" y="589" width="2" height="15" fill="#fff"/><rect x="439" y="589" width="1" height="15" fill="#696969"/>
<g fill="#000" shape-rendering="auto">
<path d="M574.5 129 L578.5 125 L582.5 129 Z"/>
<path d="M574.5 579 L578.5 583 L582.5 579 Z"/>
<path d="M449 592.5 L445 596.5 L449 600.5 Z"/>
<path d="M560 592.5 L564 596.5 L560 600.5 Z"/>
<rect x="17" y="592" width="1" height="9"/><path d="M24 591.5 L19 596.5 L24 601.5 Z"/><path d="M39 591.5 L34 596.5 L39 601.5 Z"/><path d="M51 591.5 L56 596.5 L51 601.5 Z"/><path d="M66 591.5 L71 596.5 L66 601.5 Z"/><rect x="72" y="592" width="1" height="9"/>
<rect x="630" y="591" width="1" height="9"/><path d="M637 590.5 L632 595.5 L637 600.5 Z"/><path d="M652 590.5 L647 595.5 L652 600.5 Z"/><path d="M664 590.5 L669 595.5 L664 600.5 Z"/><path d="M679 590.5 L684 595.5 L679 600.5 Z"/><rect x="685" y="591" width="1" height="9"/>
<path d="M614.5 594.5 L617.5 597.5 L620.5 594.5 Z"/>
</g>
<g shape-rendering="auto"><rect x="499.5" y="16.5" width="11" height="4" rx="1" fill="#f4f4f4" stroke="#5d627a"/><rect x="532.5" y="12.5" width="10" height="8" rx="1" fill="#f4f4f4" stroke="#5d627a"/><rect x="535.5" y="15.5" width="4" height="2" fill="#a9bdd6" stroke="#5d627a"/><path d="M566.1 13.299999999999999 L574.9 20.099999999999998 M574.9 13.299999999999999 L566.1 20.099999999999998" stroke="#5d627a" stroke-width="4.4" stroke-linecap="butt" fill="none"/><path d="M566.5 13.6 L574.5 19.8 M574.5 13.6 L566.5 19.8" stroke="#f6f6f6" stroke-width="2.4" stroke-linecap="butt" fill="none"/></g>
<g shape-rendering="auto"><rect x="1155.5" y="19.5" width="11" height="4" rx="1" fill="#f4f4f4" stroke="#3c4258"/><rect x="1188.5" y="15.5" width="10" height="8" rx="1" fill="#f4f4f4" stroke="#3c4258"/><rect x="1191.5" y="18.5" width="4" height="2" fill="#a9bdd6" stroke="#3c4258"/><path d="M1222.1 16.3 L1230.9 23.099999999999998 M1230.9 16.3 L1222.1 23.099999999999998" stroke="#3c4258" stroke-width="4.4" stroke-linecap="butt" fill="none"/><path d="M1222.5 16.599999999999998 L1230.5 22.8 M1230.5 16.599999999999998 L1222.5 22.8" stroke="#f6f6f6" stroke-width="2.4" stroke-linecap="butt" fill="none"/></g>
<rect x="9" y="8" width="16" height="16" fill="#000"/><rect x="10" y="9" width="14" height="14" fill="#d6d2ca"/>
<g fill="#4a86e8"><rect x="14" y="10" width="1" height="12"/><rect x="20" y="10" width="1" height="10"/><rect x="11" y="13" width="12" height="1"/><rect x="12" y="20" width="9" height="1"/><rect x="15" y="16" width="8" height="1"/><rect x="12" y="14" width="1" height="7"/><rect x="15" y="9" width="7" height="1"/></g>
<g fill="#0000ff"><rect x="10" y="13" width="2" height="1"/><rect x="12" y="12" width="1" height="2"/><rect x="11" y="16" width="2" height="2"/><rect x="11" y="20" width="1" height="2"/><rect x="19" y="12" width="1" height="2"/><rect x="17" y="15" width="1" height="2"/><rect x="20" y="15" width="1" height="2"/><rect x="19" y="17" width="1" height="2"/><rect x="20" y="19" width="1" height="1"/></g>
<g fill="#ff0000"><rect x="15" y="13" width="2" height="1"/><rect x="22" y="11" width="2" height="1"/><rect x="21" y="13" width="2" height="1"/><rect x="21" y="17" width="2" height="1"/></g>
<rect x="19" y="21" width="5" height="2" fill="#000"/><rect x="20" y="22" width="4" height="1" fill="#d6d2ca"/>
<rect x="603" y="11" width="16" height="16" fill="#000"/><rect x="604" y="12" width="14" height="3" fill="#0000ff"/><rect x="604" y="15" width="14" height="11" fill="#fff"/>
<rect x="606" y="16" width="10" height="1" fill="#808080"/><rect x="608" y="18" width="9" height="7" fill="#000"/><rect x="609" y="19" width="7" height="5" fill="#00ffff"/><path d="M609.5 22.5 q3.5 -4 7 0" stroke="#000" fill="none" shape-rendering="auto"/>
<rect x="605" y="19" width="1" height="1" fill="#000"/><rect x="605" y="21" width="1" height="1" fill="#000"/><rect x="605" y="23" width="1" height="1" fill="#000"/>
<defs><pattern id="hatch" width="2" height="2" patternUnits="userSpaceOnUse"><rect width="2" height="2" fill="#fff"/><rect width="1" height="1" fill="#f0f0f0"/><rect x="1" y="1" width="1" height="1" fill="#f0f0f0"/></pattern><pattern id="hatchg" width="2" height="2" patternUnits="userSpaceOnUse"><rect width="2" height="2" fill="#a0a0a0"/><rect width="1" height="1" fill="#e0e0e0"/><rect x="1" y="1" width="1" height="1" fill="#e0e0e0"/></pattern><pattern id="hatchk" width="2" height="2" patternUnits="userSpaceOnUse"><rect width="2" height="2" fill="#fff"/><rect width="1" height="1" fill="#000"/><rect x="1" y="1" width="1" height="1" fill="#000"/></pattern><pattern id="hatchy" width="2" height="2" patternUnits="userSpaceOnUse"><rect width="2" height="2" fill="#ffff00"/><rect width="1" height="1" fill="#808000"/><rect x="1" y="1" width="1" height="1" fill="#808000"/></pattern></defs>
<rect x="12" y="56" width="570" height="1" fill="#a0a0a0"/><rect x="12" y="57" width="570" height="1" fill="#fff"/>
<rect x="12" y="82" width="570" height="1" fill="#a0a0a0"/><rect x="12" y="83" width="570" height="1" fill="#fff"/>
<rect x="10" y="33" width="23" height="21" fill="url(#hatch)"/><rect x="10" y="33" width="23" height="1" fill="#a0a0a0"/><rect x="10" y="33" width="1" height="21" fill="#a0a0a0"/><rect x="10" y="53" width="23" height="1" fill="#fff"/><rect x="32" y="33" width="1" height="21" fill="#fff"/>
<polygon points="18,38 18,49 20.6,46.6 22.8,51 24.6,50.2 22.4,45.8 26,45.8" fill="#000" shape-rendering="auto"/>
<polyline points="36.5,44.5 39.5,41.5 43.5,46.5 47.5,41.5 51.5,46.5 52.5,45.5" fill="none" stroke="#000" stroke-width="1" shape-rendering="auto"/>
<text x="67" y="50" font-family="'Liberation Serif',sans-serif" font-size="20px" font-weight="bold" fill="#000" text-anchor="middle" textLength="14.4" lengthAdjust="spacingAndGlyphs">T</text>
<rect x="82" y="37" width="3" height="3" fill="#000"/>
<path d="M85 38.5 H90.5 V48.5 H97" fill="none" stroke="#000" stroke-width="1" shape-rendering="auto" style="shape-rendering:crispEdges"/>
<rect x="105" y="36" width="3" height="3" fill="#000"/>
<path d="M107 38 L120 51" fill="none" stroke="#000" stroke-width="0.95" shape-rendering="auto"/>
<rect x="129.5" y="36.5" width="13" height="12" rx="2" fill="#ffff00" stroke="#000" shape-rendering="auto"/>
<rect x="131.5" y="38.5" width="9" height="4" fill="#e4e4f4" stroke="#8080c0" stroke-width="1"/><polyline points="133.5,41.5 134.5,40.5 135.5,40.5 136.5,41.5" fill="none" stroke="#000" stroke-width="0.9" shape-rendering="auto"/><polyline points="136.5,41.5 137.5,40.5 138.5,40.5 139.5,41.5" fill="none" stroke="#000" stroke-width="0.9" shape-rendering="auto"/><rect x="131" y="44" width="2" height="2" fill="#e0e0ff"/><rect x="139" y="44" width="2" height="2" fill="#e0e0ff"/><rect x="132" y="47" width="8" height="1" fill="#000"/><rect x="130" y="49" width="3" height="2" fill="#000"/><rect x="139" y="49" width="3" height="2" fill="#000"/>
<path d="M151.5 42.5 L157.5 36.5" fill="none" stroke="#000" stroke-width="1" shape-rendering="auto"/><rect x="160.5" y="36.5" width="6" height="6" fill="none" stroke="#000" stroke-width="1"/><path d="M154.5 44 L158 47.5 L154.5 51 L151 47.5 Z" fill="none" stroke="#000" stroke-width="1" shape-rendering="auto"/><circle cx="163.5" cy="47.5" r="3" fill="none" stroke="#000" stroke-width="1" shape-rendering="auto"/>
<rect x="175" y="42" width="7" height="1" fill="#000"/><rect x="176" y="43" width="5" height="1" fill="#000"/><rect x="177" y="44" width="3" height="1" fill="#000"/><rect x="178" y="45" width="1" height="1" fill="#000"/>
<rect x="189.5" y="36.5" width="14" height="8" fill="none" stroke="#000" stroke-width="1"/><rect x="189" y="36" width="1" height="15" fill="#000"/>
<text x="218.5" y="51" font-family="'Liberation Serif',sans-serif" font-size="22px" font-weight="bold" fill="#000" text-anchor="middle" textLength="9" lengthAdjust="spacingAndGlyphs">i</text>
<polygon points="236,36 236,47 238.6,44.6 240.8,49 242.6,48.2 240.4,43.8 244,43.8" fill="#000" shape-rendering="auto"/>
<text x="242.2" y="48" font-family="'Liberation Serif',sans-serif" font-size="17px" font-weight="bold" fill="#0000a0" text-anchor="start" stroke="#0000a0" stroke-width="0.4">?</text>
<rect x="255" y="33" width="23" height="1" fill="#fff"/><rect x="255" y="33" width="1" height="22" fill="#fff"/><rect x="255" y="54" width="23" height="1" fill="#a0a0a0"/><rect x="277" y="33" width="1" height="22" fill="#a0a0a0"/>
<circle cx="264" cy="42" r="5" fill="#0000ff" stroke="#0000c0" stroke-width="1" shape-rendering="auto"/><path d="M260 40 q2 -3 5 -2 q1 3 -2 4 z" fill="#00c000" stroke="#00a000" stroke-width="1" shape-rendering="auto"/><path d="M269 38 q3 -1 4 3" fill="none" stroke="#a00000" stroke-width="1.2" shape-rendering="auto"/><polygon points="271,40 275,40 273,43" fill="#a00000" shape-rendering="auto"/>
<rect x="262.5" y="42.5" width="8" height="9" fill="#fff" stroke="#000080" stroke-width="1"/><rect x="264" y="45" width="5" height="1" fill="#0000c0"/><rect x="264" y="47" width="5" height="1" fill="#0000c0"/><rect x="264" y="49" width="5" height="1" fill="#0000c0"/>
<rect x="281.5" y="36.5" width="15" height="14" fill="#f0f0f0" stroke="#000" stroke-width="1"/><rect x="283" y="38" width="7" height="8" rx="2" fill="#008000" shape-rendering="auto"/><rect x="286" y="39" width="1" height="4" fill="#fff"/><rect x="286" y="44" width="1" height="1" fill="#fff"/>
<circle cx="291.7" cy="45.6" r="3.4" fill="#ff0000" stroke="#ff0000" stroke-width="1" shape-rendering="auto"/><path d="M290.2 44.1 l3 3 m0 -3 l-3 3" fill="none" stroke="#fff" stroke-width="1" shape-rendering="auto"/>
<rect x="303" y="35" width="1" height="17" fill="#a0a0a0"/><rect x="304" y="35" width="1" height="17" fill="#fff"/>
<rect x="10" y="59" width="23" height="21" fill="url(#hatch)"/><rect x="10" y="59" width="23" height="1" fill="#a0a0a0"/><rect x="10" y="59" width="1" height="21" fill="#a0a0a0"/><rect x="10" y="79" width="23" height="1" fill="#fff"/><rect x="32" y="59" width="1" height="21" fill="#fff"/>
<text x="21.5" y="72.6" font-family="'DejaVu Sans',sans-serif" font-size="6.6px" font-weight="bold" fill="#000" text-anchor="middle" textLength="15" lengthAdjust="spacingAndGlyphs">TEXT</text>
<rect x="33" y="59" width="23" height="21" fill="url(#hatch)"/><rect x="33" y="59" width="23" height="1" fill="#a0a0a0"/><rect x="33" y="59" width="1" height="21" fill="#a0a0a0"/><rect x="33" y="79" width="23" height="1" fill="#fff"/><rect x="55" y="59" width="1" height="21" fill="#fff"/>
<text x="45.5" y="69.4" font-family="'DejaVu Sans Mono',sans-serif" font-size="6.5px" font-weight="bold" fill="#000" text-anchor="middle">R1</text>
<polyline points="37.5,73.5 39.5,71.5 43.5,75.5 47.5,71.5 51.5,75.5 53.5,73.5" fill="none" stroke="#000" stroke-width="1" shape-rendering="auto"/>
<rect x="59.5" y="64.5" width="8" height="8" fill="#fff" stroke="#000" stroke-width="1"/><rect x="63" y="66" width="1" height="5" fill="#000"/><rect x="62" y="67" width="1" height="1" fill="#000"/><rect x="62" y="70" width="3" height="1" fill="#000"/><rect x="62" y="73" width="1" height="4" fill="#000"/><polyline points="68.5,67.5 72.5,71.5 75.5,68.5" fill="none" stroke="#000" stroke-width="1" shape-rendering="auto"/>
<text x="83" y="68.5" font-family="'DejaVu Sans Mono',sans-serif" font-size="7px" font-weight="bold" fill="#a0a0a0" text-anchor="start">VIP</text><polyline points="84.5,72.5 88.5,76.5 97.5,65.5" fill="none" stroke="#a0a0a0" stroke-width="1.7" shape-rendering="auto"/>
<rect x="106" y="67" width="7" height="1" fill="#a0a0a0"/><rect x="107" y="68" width="5" height="1" fill="#a0a0a0"/><rect x="108" y="69" width="3" height="1" fill="#a0a0a0"/><rect x="109" y="70" width="1" height="1" fill="#a0a0a0"/>
<rect x="120.5" y="64.5" width="10" height="8" fill="#fff" stroke="#900000" stroke-width="1"/><text x="125.5" y="71" font-family="'DejaVu Sans',sans-serif" font-size="6.5px" font-weight="bold" fill="#000" text-anchor="middle">13</text><rect x="125" y="73" width="1" height="5" fill="#000"/><path d="M131.5 72.5 L136 67.5" fill="none" stroke="#000" stroke-width="1" shape-rendering="auto"/>
<rect x="144" y="66" width="13" height="1" fill="#0000ff"/><polygon points="154,63.5 158,66.5 154,69.5" fill="#0000ff" shape-rendering="auto"/><rect x="144" y="73" width="14" height="1" fill="#000"/><polygon points="148,71 151,73.5 148,76" fill="#000" shape-rendering="auto"/><rect x="151" y="71" width="1" height="5" fill="#000"/><polygon points="154.5,72 152.5,73.5 154.5,75" fill="#000" shape-rendering="auto"/>
<rect x="167" y="73" width="14" height="1" fill="#000"/><polygon points="171,71 174,73.5 171,76" fill="#000" shape-rendering="auto"/><rect x="174" y="71" width="1" height="5" fill="#000"/><polygon points="177.5,72 175.5,73.5 177.5,75" fill="#000" shape-rendering="auto"/><path d="M168 63 l4 2" fill="none" stroke="#a0a0a0" stroke-width="2" shape-rendering="auto"/><path d="M173 65 q-3 4 0 6 q3 -2 0 -6" fill="#ffff00" stroke="#ffff00" stroke-width="1.5" shape-rendering="auto"/><polygon points="173,67 175,70 173,72.5 171,70" fill="#ff0000" shape-rendering="auto"/>
<text x="197" y="69.6" font-family="'Liberation Sans',sans-serif" font-size="9px" font-weight="normal" fill="#0000ff" text-anchor="middle">ON</text><rect x="190" y="73" width="14" height="1" fill="#000"/><polygon points="194,71 197,73.5 194,76" fill="#000" shape-rendering="auto"/><rect x="197" y="71" width="1" height="5" fill="#000"/><polygon points="200.5,72 198.5,73.5 200.5,75" fill="#000" shape-rendering="auto"/>
<rect x="212" y="68" width="3" height="3" fill="#000"/><rect x="225" y="68" width="3" height="3" fill="#000"/><rect x="215" y="69" width="10" height="1" fill="#000"/>
<rect x="235" y="63" width="1" height="1" fill="#000"/>
<rect x="239" y="63" width="1" height="1" fill="#000"/>
<rect x="243" y="63" width="1" height="1" fill="#000"/>
<rect x="247" y="63" width="1" height="1" fill="#000"/>
<rect x="251" y="63" width="1" height="1" fill="#000"/>
<rect x="235" y="67" width="1" height="1" fill="#000"/>
<rect x="239" y="67" width="1" height="1" fill="#000"/>
<rect x="243" y="67" width="1" height="1" fill="#000"/>
<rect x="247" y="67" width="1" height="1" fill="#000"/>
<rect x="251" y="67" width="1" height="1" fill="#000"/>
<rect x="235" y="71" width="1" height="1" fill="#000"/>
<rect x="239" y="71" width="1" height="1" fill="#000"/>
<rect x="243" y="71" width="1" height="1" fill="#000"/>
<rect x="247" y="71" width="1" height="1" fill="#000"/>
<rect x="251" y="71" width="1" height="1" fill="#000"/>
<rect x="235" y="75" width="1" height="1" fill="#000"/>
<rect x="239" y="75" width="1" height="1" fill="#000"/>
<rect x="243" y="75" width="1" height="1" fill="#000"/>
<rect x="247" y="75" width="1" height="1" fill="#000"/>
<rect x="251" y="75" width="1" height="1" fill="#000"/>
<rect x="259" y="68" width="7" height="1" fill="#000"/><rect x="260" y="69" width="5" height="1" fill="#000"/><rect x="261" y="70" width="3" height="1" fill="#000"/><rect x="262" y="71" width="1" height="1" fill="#000"/>
<rect x="273.65" y="62.65" width="14.7" height="13.7" fill="none" stroke="#000" stroke-width="1.3"/><rect x="280.65" y="71.65" width="7.7" height="4.7" fill="none" stroke="#000" stroke-width="1.3"/><rect x="281" y="73" width="7" height="1" fill="#000"/>
<rect x="293" y="59" width="23" height="21" fill="url(#hatch)"/><rect x="293" y="59" width="23" height="1" fill="#a0a0a0"/><rect x="293" y="59" width="1" height="21" fill="#a0a0a0"/><rect x="293" y="79" width="23" height="1" fill="#fff"/><rect x="315" y="59" width="1" height="21" fill="#fff"/>
<polyline points="301.5,63.5 301.5,66.5 305.5,66.5 305.5,68.5 303.5,70.5 305.5,72.5 305.5,75.5 301.5,75.5 301.5,78.5" fill="none" stroke="#000" stroke-width="1.1" shape-rendering="auto"/><polygon points="306,69.5 306,77.5 308,75.7 309.6,79.1 311,78.5 309.4,75.3 312,75.3" fill="#000" shape-rendering="auto"/>
<rect x="318" y="61" width="1" height="17" fill="#a0a0a0"/><rect x="319" y="61" width="1" height="17" fill="#fff"/>
<rect x="324.5" y="67.5" width="11" height="9" fill="#fff" stroke="#000" stroke-width="1"/><rect x="324" y="67" width="12" height="2" fill="#000"/><rect x="326" y="71" width="3" height="1" fill="#000"/><rect x="330" y="71" width="4" height="1" fill="#000"/><rect x="326" y="73" width="8" height="1" fill="#000"/><polygon points="327.5,67.5 331.5,63.5 335.5,67.5 331.5,71.5" fill="url(#hatchk)" stroke="#000" stroke-width="1" shape-rendering="auto"/><path d="M331.5 63.5 L333 62.5 H337.5 V67 L335.5 67.5" fill="#fff" stroke="#000" stroke-width="1" shape-rendering="auto"/><polygon points="338,62 340,62 340,69 338,67" fill="#000090" shape-rendering="auto"/>
<rect x="346" y="61" width="1" height="17" fill="#a0a0a0"/><rect x="347" y="61" width="1" height="17" fill="#fff"/>
<rect x="353.5" y="63.5" width="9" height="8" fill="none" stroke="#a0a0a0" stroke-width="1"/><rect x="357.5" y="67.5" width="9" height="8" fill="none" stroke="#a0a0a0" stroke-width="1"/><rect x="352" y="62" width="3" height="3" fill="#a0a0a0"/><rect x="361" y="62" width="3" height="3" fill="#a0a0a0"/><rect x="352" y="70" width="3" height="3" fill="#a0a0a0"/><rect x="361" y="70" width="3" height="3" fill="#a0a0a0"/><rect x="356" y="66" width="3" height="3" fill="#a0a0a0"/><rect x="365" y="66" width="3" height="3" fill="#a0a0a0"/><rect x="356" y="74" width="3" height="3" fill="#a0a0a0"/><rect x="365" y="74" width="3" height="3" fill="#a0a0a0"/>
<rect x="376" y="69" width="14" height="1" fill="#a0a0a0"/><polygon points="378,66 382,69.5 378,73" fill="#a0a0a0" shape-rendering="auto"/><polygon points="388,66 384,69.5 388,73" fill="#a0a0a0" shape-rendering="auto"/>
<path d="M401.5 65 A6.2 6.2 0 1 1 400.5 74" fill="none" stroke="#a0a0a0" stroke-width="1.3" shape-rendering="auto"/><polygon points="399,62 399,67 404,67" fill="#a0a0a0" shape-rendering="auto"/><rect x="405" y="69" width="2" height="2" fill="#a0a0a0"/>
<path d="M433 67.5 H426 q-3.5 0 -3.5 3.5 q0 3.5 3.5 3.5 H436" fill="none" stroke="#a0a0a0" stroke-width="1.2" shape-rendering="auto"/><rect x="430" y="62" width="1" height="15" fill="#a0a0a0"/><polygon points="433,64 437,67.5 433,71" fill="#a0a0a0" shape-rendering="auto"/>
<path d="M448.5 66 V71.5 q0 4 4 4 q4 0 4 -4 V63" fill="none" stroke="#a0a0a0" stroke-width="1.2" shape-rendering="auto"/><rect x="444" y="68" width="17" height="1" fill="#a0a0a0"/><polygon points="445,67 448.5,62.5 452,67" fill="#a0a0a0" shape-rendering="auto"/>
<rect x="466" y="61" width="1" height="17" fill="#a0a0a0"/><rect x="467" y="61" width="1" height="17" fill="#fff"/>
<g transform="translate(473,63)"><g transform="scale(0.68)"><rect x="2" y="0" width="3" height="2" fill="#000"/><rect x="9" y="0" width="3" height="2" fill="#000"/><rect x="1" y="2" width="5" height="3" fill="#000"/><rect x="8" y="2" width="5" height="3" fill="#000"/><rect x="0" y="5" width="6" height="7" fill="#000"/><rect x="8" y="5" width="6" height="7" fill="#000"/><rect x="6" y="4" width="2" height="4" fill="#000"/><rect x="2" y="3" width="1" height="1" fill="#fff"/><rect x="9" y="3" width="1" height="1" fill="#fff"/><rect x="1" y="7" width="1" height="3" fill="#fff"/><rect x="9" y="7" width="1" height="3" fill="#fff"/></g></g><polyline points="475.5,74.5 477.5,73.5 479.5,75.5 481.5,73.5 483.5,75.5 485.5,73.5 486.5,74.5" fill="none" stroke="#000090" stroke-width="1" shape-rendering="auto"/>
<g transform="translate(495,63)"><g transform="scale(1.08)"><rect x="2" y="0" width="3" height="2" fill="#000"/><rect x="9" y="0" width="3" height="2" fill="#000"/><rect x="1" y="2" width="5" height="3" fill="#000"/><rect x="8" y="2" width="5" height="3" fill="#000"/><rect x="0" y="5" width="6" height="7" fill="#000"/><rect x="8" y="5" width="6" height="7" fill="#000"/><rect x="6" y="4" width="2" height="4" fill="#000"/><rect x="2" y="3" width="1" height="1" fill="#fff"/><rect x="9" y="3" width="1" height="1" fill="#fff"/><rect x="1" y="7" width="1" height="3" fill="#fff"/><rect x="9" y="7" width="1" height="3" fill="#fff"/></g></g>
<rect x="517" y="61" width="1" height="17" fill="#a0a0a0"/><rect x="518" y="61" width="1" height="17" fill="#fff"/>
<rect x="524.0" y="63.0" width="14" height="9" fill="none" stroke="#a0a0a0" stroke-width="2"/><rect x="526" y="66" width="10" height="1" fill="#a0a0a0"/><rect x="526" y="68" width="10" height="1" fill="#a0a0a0"/><rect x="526" y="70" width="10" height="1" fill="#a0a0a0"/><rect x="530" y="63" width="1" height="10" fill="#a0a0a0"/><polyline points="527.5,77.5 531.5,74.5 535.5,77.5" fill="none" stroke="#a0a0a0" stroke-width="1.4" shape-rendering="auto"/><rect x="531" y="73" width="1" height="3" fill="#a0a0a0"/>
<rect x="545" y="61" width="1" height="17" fill="#a0a0a0"/><rect x="546" y="61" width="1" height="17" fill="#fff"/>
<polygon points="18.5,88 24.5,88 29,92.5 29,98.5 24.5,103 18.5,103 14,98.5 14,92.5" fill="#a0a0a0" shape-rendering="auto"/><rect x="20" y="91" width="3" height="5" fill="#fff"/><rect x="21" y="96" width="1" height="1" fill="#fff"/><rect x="20" y="98" width="3" height="2" fill="#fff"/>
<polygon points="41.5,88 47.5,88 52,92.5 52,98.5 47.5,103 41.5,103 37,98.5 37,92.5" fill="#a0a0a0" shape-rendering="auto"/><path d="M41.5 92.5 l6 6 m0 -6 l-6 6" fill="none" stroke="#fff" stroke-width="1.8" shape-rendering="auto"/>
<rect x="58" y="87" width="1" height="17" fill="#a0a0a0"/><rect x="59" y="87" width="1" height="17" fill="#fff"/>
<rect x="64" y="88" width="8" height="8" fill="#a0a0a0"/><rect x="68" y="92" width="8" height="8" fill="#a0a0a0"/><rect x="67" y="90" width="7" height="7" fill="url(#hatchg)"/><rect x="72" y="96" width="7" height="7" fill="#a0a0a0"/>
<rect x="87" y="88" width="8" height="8" fill="#a0a0a0"/><rect x="91" y="92" width="8" height="8" fill="#a0a0a0"/><rect x="90" y="90" width="7" height="7" fill="url(#hatchg)"/><rect x="95" y="96" width="7" height="7" fill="#a0a0a0"/>
<rect x="109" y="87" width="1" height="17" fill="#a0a0a0"/><rect x="110" y="87" width="1" height="17" fill="#fff"/>
<circle cx="122" cy="94" r="5.1" fill="#fff" stroke="#000" stroke-width="1.25" shape-rendering="auto"/><path d="M126 98 L130.6 102.4" fill="none" stroke="#000" stroke-width="2.2" shape-rendering="auto"/><path d="M118.4 92.6 A3.8 3.8 0 0 1 120.6 90.4" fill="none" stroke="#00ffff" stroke-width="1" shape-rendering="auto"/><path d="M125.6 95.4 A3.8 3.8 0 0 1 123.4 97.6" fill="none" stroke="#00ffff" stroke-width="1" shape-rendering="auto"/><rect x="119" y="93" width="6" height="2" fill="#000"/><rect x="121" y="91" width="2" height="6" fill="#000"/>
<circle cx="145" cy="94" r="5.1" fill="#fff" stroke="#000" stroke-width="1.25" shape-rendering="auto"/><path d="M149 98 L153.6 102.4" fill="none" stroke="#000" stroke-width="2.2" shape-rendering="auto"/><path d="M141.4 92.6 A3.8 3.8 0 0 1 143.6 90.4" fill="none" stroke="#00ffff" stroke-width="1" shape-rendering="auto"/><path d="M148.6 95.4 A3.8 3.8 0 0 1 146.4 97.6" fill="none" stroke="#00ffff" stroke-width="1" shape-rendering="auto"/><rect x="142" y="93" width="6" height="2" fill="#000"/>
<rect x="160" y="87" width="1" height="17" fill="#a0a0a0"/><rect x="161" y="87" width="1" height="17" fill="#fff"/>
<path d="M167.5 90.5 h1 l2 -2 h4 l2 2 h5 v12 h-14 z" fill="url(#hatchg)" stroke="#a0a0a0" shape-rendering="auto"/><rect x="173" y="94" width="3" height="3" fill="#a0a0a0"/>
<rect x="188" y="87" width="1" height="17" fill="#a0a0a0"/><rect x="189" y="87" width="1" height="17" fill="#fff"/>
<circle cx="202" cy="96" r="6.3" fill="url(#hatchg)" shape-rendering="crispEdges"/><circle cx="200.5" cy="94.5" r="4.2" fill="#e6e6e6" stroke="#a0a0a0" stroke-width="1" shape-rendering="auto"/><path d="M196.5 94.5 H204.5 M200.5 90.5 V98.5" fill="none" stroke="#a0a0a0" stroke-width="1" shape-rendering="auto"/>
<text x="224.5" y="102" font-family="'Liberation Serif',sans-serif" font-size="20.4px" font-weight="normal" fill="#a0a0a0" text-anchor="middle" textLength="13" lengthAdjust="spacingAndGlyphs">F</text>
<rect x="606" y="59" width="633" height="1" fill="#a0a0a0"/><rect x="606" y="60" width="633" height="1" fill="#fff"/>
<rect x="606" y="85" width="633" height="1" fill="#a0a0a0"/><rect x="606" y="86" width="633" height="1" fill="#fff"/>
<polygon points="611,40 611,51 613.6,48.6 615.8,53 617.6,52.2 615.4,47.8 619,47.8" fill="#000" shape-rendering="auto"/>
<path d="M630.5 45.5 L636.5 39.5" fill="none" stroke="#000" stroke-width="1" shape-rendering="auto"/><rect x="639.5" y="39.5" width="6" height="6" fill="none" stroke="#000" stroke-width="1"/><path d="M633.5 47 L637 50.5 L633.5 54 L630 50.5 Z" fill="none" stroke="#000" stroke-width="1" shape-rendering="auto"/><circle cx="642.5" cy="50.5" r="3" fill="none" stroke="#000" stroke-width="1" shape-rendering="auto"/>
<rect x="655" y="45" width="7" height="1" fill="#000"/><rect x="656" y="46" width="5" height="1" fill="#000"/><rect x="657" y="47" width="3" height="1" fill="#000"/><rect x="658" y="48" width="1" height="1" fill="#000"/>
<rect x="665" y="36" width="23" height="21" fill="url(#hatch)"/><rect x="665" y="36" width="23" height="1" fill="#a0a0a0"/><rect x="665" y="36" width="1" height="21" fill="#a0a0a0"/><rect x="665" y="56" width="23" height="1" fill="#fff"/><rect x="687" y="36" width="1" height="21" fill="#fff"/>
<path d="M669 41.5 H683 M669.5 41 V50 M681.5 46 V50 M671 49.5 H682" fill="none" stroke="#000" stroke-width="1" shape-rendering="auto" stroke-dasharray="1 1" style="shape-rendering:crispEdges"/><path d="M669.5 51.5 q3 3 6 0 q2 -2 3.5 -5.5 q2 -4 4.5 -2.5 q1.5 1 2 3.5" fill="none" stroke="#000090" stroke-width="1.15" shape-rendering="auto"/>
<path d="M691 45.5 q1.5 -5 3.5 -5 q2 0 3 3 q1 3 2.5 3 q1.5 0 2.5 -3 q1 -3 2 -3 q1.5 0 3 5" fill="none" stroke="#000090" stroke-width="1.1" shape-rendering="auto"/><path d="M694.5 41 V48 M703.5 41 V48" fill="none" stroke="#000" stroke-width="1" shape-rendering="auto" stroke-dasharray="1 1" style="shape-rendering:crispEdges"/><rect x="691" y="49" width="17" height="1" fill="#000"/><rect x="693" y="52" width="5" height="1" fill="#000"/><rect x="700" y="52" width="5" height="1" fill="#000"/><rect x="693" y="54" width="5" height="1" fill="#000"/><rect x="700" y="54" width="5" height="1" fill="#000"/>
<path d="M714 40.5 H717.5 V43.5 H727.5 V40.5 H731" fill="none" stroke="#000090" stroke-width="1.1" shape-rendering="auto" style="shape-rendering:crispEdges"/><path d="M717.5 45 V51 M727.5 45 V51" fill="none" stroke="#000" stroke-width="1" shape-rendering="auto" stroke-dasharray="1 1" style="shape-rendering:crispEdges"/><rect x="715" y="52" width="15" height="1" fill="#000"/><polygon points="715,52.5 717.5,50.5 717.5,54.5" fill="#000" shape-rendering="auto"/><polygon points="730,52.5 727.5,50.5 727.5,54.5" fill="#000" shape-rendering="auto"/><rect x="719" y="50" width="1" height="5" fill="#000"/><rect x="721" y="50" width="1" height="5" fill="#000"/><rect x="720" y="52" width="1" height="1" fill="#000"/><rect x="723.5" y="50.5" width="2" height="4" fill="none" stroke="#000" stroke-width="1"/>
<path d="M739 39.5 H752 M739.5 42 V52 M740 53.5 H746" fill="none" stroke="#000" stroke-width="1" shape-rendering="auto" stroke-dasharray="1 1" style="shape-rendering:crispEdges"/><path d="M745.5 53.5 q2 -1 3 -6 q1 -6 2.5 -7.5 q1.5 -1.5 2.8 2" fill="none" stroke="#000090" stroke-width="1.1" shape-rendering="auto"/><polygon points="737.5,42 739.5,39 741.5,42" fill="#000" shape-rendering="auto"/><polygon points="737.5,51 739.5,54 741.5,51" fill="#000" shape-rendering="auto"/><rect x="737" y="45" width="1" height="4" fill="#000"/><rect x="739.5" y="45.5" width="2" height="3" fill="#f0f0f0" stroke="#000" stroke-width="1"/>
<text x="772.6" y="43.2" font-family="'DejaVu Sans',sans-serif" font-size="6.2px" font-weight="bold" fill="#000" text-anchor="middle">1.0</text><path d="M776 44.5 H771 L766.5 49" fill="none" stroke="#000" stroke-width="1" shape-rendering="auto"/><polygon points="764.5,51 765.5,47.2 768.3,50" fill="#000" shape-rendering="auto"/><path d="M760 50.5 H765.5 V53.5 H770.5 V50.5 H776.5" fill="none" stroke="#000090" stroke-width="1.1" shape-rendering="auto" style="shape-rendering:crispEdges"/>
<text x="791.3" y="43.6" font-family="'DejaVu Sans',sans-serif" font-size="6.3px" font-weight="bold" fill="#900000" text-anchor="middle">F()</text><path d="M784.5 53.5 q2 -5 6.5 -5 q4.5 0 6.5 5" fill="none" stroke="#000090" stroke-width="1.1" shape-rendering="auto"/><rect x="784" y="42" width="1" height="4" fill="#000"/><rect x="797" y="42" width="1" height="4" fill="#000"/><polygon points="782.3,45 786.7,45 784.5,48.6" fill="#000" shape-rendering="auto"/><polygon points="795.3,45 799.7,45 797.5,48.6" fill="#000" shape-rendering="auto"/><path d="M784.5 49 V54 M797.5 49 V54" fill="none" stroke="#000" stroke-width="1" shape-rendering="auto" stroke-dasharray="1 1" style="shape-rendering:crispEdges"/>
<text x="814" y="53" font-family="'Liberation Serif',sans-serif" font-size="20px" font-weight="bold" fill="#000" text-anchor="middle" textLength="14.4" lengthAdjust="spacingAndGlyphs">T</text>
<rect x="828" y="38" width="1" height="17" fill="#a0a0a0"/><rect x="829" y="38" width="1" height="17" fill="#fff"/>
<rect x="834.5" y="44.5" width="11" height="9" fill="#fff" stroke="#000" stroke-width="1"/><rect x="834" y="44" width="12" height="2" fill="#000"/><rect x="836" y="48" width="3" height="1" fill="#000"/><rect x="840" y="48" width="4" height="1" fill="#000"/><rect x="836" y="50" width="8" height="1" fill="#000"/><polygon points="837.5,44.5 841.5,40.5 845.5,44.5 841.5,48.5" fill="url(#hatchk)" stroke="#000" stroke-width="1" shape-rendering="auto"/><path d="M841.5 40.5 L843 39.5 H847.5 V44 L845.5 44.5" fill="#fff" stroke="#000" stroke-width="1" shape-rendering="auto"/><polygon points="848,39 850,39 850,46 848,44" fill="#000090" shape-rendering="auto"/>
<rect x="856" y="38" width="1" height="17" fill="#a0a0a0"/><rect x="857" y="38" width="1" height="17" fill="#fff"/>
<polygon points="864,40.5 864,52.5 876.8,46.5" fill="#000" shape-rendering="auto"/>
<rect x="888" y="42" width="12" height="12" fill="#fff"/><rect x="887" y="41" width="12" height="12" fill="#a0a0a0"/><rect x="912" y="42" width="4" height="12" fill="#fff"/><rect x="919" y="42" width="4" height="12" fill="#fff"/><rect x="911" y="41" width="4" height="12" fill="#a0a0a0"/><rect x="918" y="41" width="4" height="12" fill="#a0a0a0"/>
<rect x="930" y="38" width="1" height="17" fill="#a0a0a0"/><rect x="931" y="38" width="1" height="17" fill="#fff"/>
<path d="M936 54 L948.5 41.5 H952" fill="none" stroke="#000" stroke-width="1" shape-rendering="auto"/><rect x="939" y="49" width="2" height="2" fill="#000"/><rect x="944" y="44" width="2" height="2" fill="#000"/>
<path d="M961 53 L973 41" fill="none" stroke="#000" stroke-width="1" shape-rendering="auto"/><rect x="959.5" y="51.5" width="3" height="3" fill="#f0f0f0" stroke="#000" stroke-width="1"/><rect x="965.5" y="45.5" width="3" height="3" fill="#f0f0f0" stroke="#000" stroke-width="1"/><rect x="971.5" y="39.5" width="3" height="3" fill="#f0f0f0" stroke="#000" stroke-width="1"/>
<rect x="981" y="38" width="1" height="17" fill="#a0a0a0"/><rect x="982" y="38" width="1" height="17" fill="#fff"/>
<rect x="987.6" y="39.6" width="14.8" height="13.8" fill="none" stroke="#000" stroke-width="1.2"/><path d="M989 40.5 H1001 M989 52.5 H1001 M988.5 41 V52 M1001.5 41 V52" fill="none" stroke="#000" stroke-width="1" shape-rendering="auto" stroke-dasharray="1 1" style="shape-rendering:crispEdges"/>
<rect x="1010.6" y="39.6" width="14.8" height="13.8" fill="none" stroke="#000" stroke-width="1.2"/><path d="M1011 44.5 H1025 M1011 48.5 H1025 M1015.5 40 V53 M1020.5 40 V53" fill="none" stroke="#707070" stroke-width="1" shape-rendering="auto" stroke-dasharray="1 1" style="shape-rendering:crispEdges"/><rect x="1014" y="44" width="3" height="1" fill="#000"/><rect x="1015" y="43" width="1" height="3" fill="#000"/><rect x="1014" y="48" width="3" height="1" fill="#000"/><rect x="1015" y="47" width="1" height="3" fill="#000"/><rect x="1019" y="44" width="3" height="1" fill="#000"/><rect x="1020" y="43" width="1" height="3" fill="#000"/><rect x="1019" y="48" width="3" height="1" fill="#000"/><rect x="1020" y="47" width="1" height="3" fill="#000"/><path d="M1012 40.5 H1025 M1012 52.5 H1025" fill="none" stroke="#000" stroke-width="1" shape-rendering="auto" stroke-dasharray="1 4" style="shape-rendering:crispEdges"/>
<rect x="1032" y="38" width="1" height="17" fill="#a0a0a0"/><rect x="1033" y="38" width="1" height="17" fill="#fff"/>
<rect x="1035" y="36" width="23" height="21" fill="url(#hatch)"/><rect x="1035" y="36" width="23" height="1" fill="#a0a0a0"/><rect x="1035" y="36" width="1" height="21" fill="#a0a0a0"/><rect x="1035" y="56" width="23" height="1" fill="#fff"/><rect x="1057" y="36" width="1" height="21" fill="#fff"/>
<rect x="1039.5" y="40.5" width="15" height="14" fill="none" stroke="#000" stroke-width="1"/><rect x="1041" y="41" width="1" height="13" fill="#000"/><rect x="1043" y="41" width="1" height="13" fill="#000"/><rect x="1045" y="41" width="1" height="13" fill="#000"/><rect x="1047" y="41" width="1" height="13" fill="#000"/><rect x="1049" y="41" width="1" height="13" fill="#000"/><rect x="1051" y="41" width="1" height="13" fill="#000"/><rect x="1053" y="41" width="1" height="13" fill="#000"/>
<rect x="1058" y="36" width="23" height="21" fill="url(#hatch)"/><rect x="1058" y="36" width="23" height="1" fill="#a0a0a0"/><rect x="1058" y="36" width="1" height="21" fill="#a0a0a0"/><rect x="1058" y="56" width="23" height="1" fill="#fff"/><rect x="1080" y="36" width="1" height="21" fill="#fff"/>
<rect x="1062.5" y="40.5" width="15" height="14" fill="none" stroke="#000" stroke-width="1"/><rect x="1063" y="42" width="14" height="1" fill="#000"/><rect x="1063" y="44" width="14" height="1" fill="#000"/><rect x="1063" y="46" width="14" height="1" fill="#000"/><rect x="1063" y="48" width="14" height="1" fill="#000"/><rect x="1063" y="50" width="14" height="1" fill="#000"/><rect x="1063" y="52" width="14" height="1" fill="#000"/>
<rect x="1081" y="36" width="23" height="21" fill="url(#hatch)"/><rect x="1081" y="36" width="23" height="1" fill="#a0a0a0"/><rect x="1081" y="36" width="1" height="21" fill="#a0a0a0"/><rect x="1081" y="56" width="23" height="1" fill="#fff"/><rect x="1103" y="36" width="1" height="21" fill="#fff"/>
<rect x="1085.5" y="40.5" width="15" height="14" fill="none" stroke="#000" stroke-width="1"/><rect x="1091" y="42" width="1" height="1" fill="#000"/><rect x="1091" y="44" width="1" height="1" fill="#000"/><rect x="1091" y="46" width="1" height="1" fill="#000"/><rect x="1091" y="48" width="1" height="1" fill="#000"/><rect x="1091" y="50" width="1" height="1" fill="#000"/><rect x="1091" y="52" width="1" height="1" fill="#000"/><rect x="1093" y="42" width="1" height="1" fill="#000"/><rect x="1093" y="44" width="1" height="1" fill="#000"/><rect x="1093" y="46" width="1" height="1" fill="#000"/><rect x="1093" y="48" width="1" height="1" fill="#000"/><rect x="1093" y="50" width="1" height="1" fill="#000"/><rect x="1093" y="52" width="1" height="1" fill="#000"/><rect x="1096" y="42" width="1" height="1" fill="#000"/><rect x="1096" y="44" width="1" height="1" fill="#000"/><rect x="1096" y="46" width="1" height="1" fill="#000"/><rect x="1096" y="48" width="1" height="1" fill="#000"/><rect x="1096" y="50" width="1" height="1" fill="#000"/><rect x="1096" y="52" width="1" height="1" fill="#000"/><rect x="1098" y="42" width="1" height="1" fill="#000"/><rect x="1098" y="44" width="1" height="1" fill="#000"/><rect x="1098" y="46" width="1" height="1" fill="#000"/><rect x="1098" y="48" width="1" height="1" fill="#000"/><rect x="1098" y="50" width="1" height="1" fill="#000"/><rect x="1098" y="52" width="1" height="1" fill="#000"/>
<rect x="1107.6" y="39.6" width="14.8" height="13.8" fill="none" stroke="#000" stroke-width="1.2"/><path d="M1112.5 41 V52 M1117.5 41 V52" fill="none" stroke="#000" stroke-width="1" shape-rendering="auto" stroke-dasharray="1 1" style="shape-rendering:crispEdges"/>
<rect x="1129" y="38" width="1" height="17" fill="#a0a0a0"/><rect x="1130" y="38" width="1" height="17" fill="#fff"/>
<rect x="1132" y="36" width="23" height="21" fill="url(#hatch)"/><rect x="1132" y="36" width="23" height="1" fill="#a0a0a0"/><rect x="1132" y="36" width="1" height="21" fill="#a0a0a0"/><rect x="1132" y="56" width="23" height="1" fill="#fff"/><rect x="1154" y="36" width="1" height="21" fill="#fff"/>
<rect x="1136.6" y="40.6" width="14.8" height="13.8" fill="none" stroke="#000" stroke-width="1.2"/><rect x="1137" y="50" width="14" height="1" fill="#000"/>
<path d="M1162.5 39 V53 M1158 47.5 H1172" fill="none" stroke="#000" stroke-width="1" shape-rendering="auto" stroke-dasharray="2 1.5" style="shape-rendering:crispEdges"/><path d="M1158 49.5 L1164 47 L1174 41" fill="none" stroke="#0000ff" stroke-width="0.95" shape-rendering="auto"/>
<rect x="1180" y="38" width="1" height="17" fill="#a0a0a0"/><rect x="1181" y="38" width="1" height="17" fill="#fff"/>
<path d="M609 79 q5 -1 7 -6 q2 -6 6 -7" fill="none" stroke="#0000ff" stroke-width="0.95" shape-rendering="auto"/><path d="M616.5 65 V80" fill="none" stroke="#000" stroke-width="1" shape-rendering="auto" stroke-dasharray="1 1" style="shape-rendering:crispEdges"/><rect x="609" y="71" width="6" height="1" fill="#000"/><polygon points="612,68.5 616,71.5 612,74.5" fill="#000" shape-rendering="auto"/>
<path d="M630 78 q7 0 10 -3 t6 -4" fill="none" stroke="#0000ff" stroke-width="0.95" shape-rendering="auto"/><rect x="638" y="66" width="1" height="8" fill="#000"/><polygon points="635.5,72 638.5,76 641.5,72" fill="#000" shape-rendering="auto"/><path d="M638.5 76 V80" fill="none" stroke="#000" stroke-width="1" shape-rendering="auto" stroke-dasharray="1 1" style="shape-rendering:crispEdges"/>
<path d="M653 78 q7 0 10 -3 t6 -4" fill="none" stroke="#0000ff" stroke-width="0.95" shape-rendering="auto"/><path d="M661.5 66 V80 M665.5 66 V80" fill="none" stroke="#000" stroke-width="1" shape-rendering="auto" stroke-dasharray="1 1" style="shape-rendering:crispEdges"/><polygon points="659,72 661.5,76 664,72" fill="#000" shape-rendering="auto"/><polygon points="663,70 665.5,74 668,70" fill="#000" shape-rendering="auto"/><rect x="661" y="68" width="1" height="5" fill="#000"/><rect x="665" y="66" width="1" height="5" fill="#000"/>
<polyline points="676.5,67.5 681.5,67.5 686.5,72.5 692.5,72.5" fill="none" stroke="#b4b4b4" stroke-width="1" shape-rendering="auto"/><polyline points="676.5,69.5 680.5,69.5 685.5,74.5 692.5,74.5" fill="none" stroke="#b4b4b4" stroke-width="1" shape-rendering="auto"/><polyline points="676.5,71.5 679.5,71.5 684.5,77.5 692.5,77.5" fill="none" stroke="#b4b4b4" stroke-width="1" shape-rendering="auto"/><polyline points="676.5,68.5 681.5,68.5 686.5,73.5 692.5,73.5" fill="none" stroke="#fff" stroke-width="1" shape-rendering="auto"/>
<rect x="698" y="64" width="1" height="17" fill="#a0a0a0"/><rect x="699" y="64" width="1" height="17" fill="#fff"/>
<rect x="704.55" y="66.55" width="14.9" height="12.9" fill="#fff" stroke="#000090" stroke-width="1.1"/><polyline points="706.5,71.5 708.5,69.5 710.5,71.5 712.5,69.5 714.5,71.5 716.5,69.5 718.5,71.5" fill="none" stroke="#0000ff" stroke-width="1" shape-rendering="auto"/><polyline points="706.5,77.5 709.5,77.5 710.5,76.5 712.5,76.5 713.5,77.5 715.5,77.5 717.5,75.5 718.5,76.5" fill="none" stroke="#ff0000" stroke-width="1.2" shape-rendering="auto"/><polygon points="706.5,76.5 713,69 718,69 711.5,76.5" fill="#000" shape-rendering="auto"/><polygon points="709,75.3 713.6,70.2 715.6,70.2 711,75.3" fill="#fff" shape-rendering="auto"/>
<rect x="726" y="64" width="1" height="17" fill="#a0a0a0"/><rect x="727" y="64" width="1" height="17" fill="#fff"/>
<rect x="729" y="62" width="23" height="21" fill="url(#hatch)"/><rect x="729" y="62" width="23" height="1" fill="#a0a0a0"/><rect x="729" y="62" width="1" height="21" fill="#a0a0a0"/><rect x="729" y="82" width="23" height="1" fill="#fff"/><rect x="751" y="62" width="1" height="21" fill="#fff"/>
<path d="M740.5 65 V80" fill="none" stroke="#000" stroke-width="1" shape-rendering="auto" stroke-dasharray="1 1.5" style="shape-rendering:crispEdges"/><rect x="734" y="72" width="15" height="1" fill="#0000ff"/><rect x="735" y="71" width="3" height="3" fill="#0000ff"/><rect x="744" y="71" width="3" height="3" fill="#0000ff"/><rect x="739" y="71" width="3" height="3" fill="#0000ff"/><rect x="734" y="72" width="1" height="1" fill="#0000ff"/>
<path d="M762.5 65 V80" fill="none" stroke="#000" stroke-width="1" shape-rendering="auto" stroke-dasharray="1 1.5" style="shape-rendering:crispEdges"/><rect x="755" y="72" width="16" height="1" fill="#0000ff"/><rect x="756" y="71" width="4" height="3" fill="#0000ff"/><rect x="766" y="71" width="4" height="3" fill="#0000ff"/>
<path d="M778 80 q3 -2 5 -9 q2 -6 3.5 -6 q1.5 0 3 6 q1.5 6 4 8" fill="none" stroke="#0000ff" stroke-width="0.95" shape-rendering="auto"/><path d="M786.5 66 V80" fill="none" stroke="#000" stroke-width="1" shape-rendering="auto" stroke-dasharray="1 1" style="shape-rendering:crispEdges"/>
<path d="M802 66 q2 2 4 8 q2 5 3.5 5 q1.5 0 3.5 -5 q2 -6 4 -8" fill="none" stroke="#0000ff" stroke-width="0.95" shape-rendering="auto"/><path d="M809.5 66 V78" fill="none" stroke="#000" stroke-width="1" shape-rendering="auto" stroke-dasharray="1 1" style="shape-rendering:crispEdges"/>
<path d="M824 77 q2 -3 4 0 q2 3 4 -3 l3 -6 l4 11" fill="none" stroke="#0000ff" stroke-width="0.95" shape-rendering="auto"/><path d="M835.5 66 V80" fill="none" stroke="#000" stroke-width="1" shape-rendering="auto" stroke-dasharray="1 1" style="shape-rendering:crispEdges"/>
<path d="M847 70 q2 -4 4 -2 q2 1 4 6 l3 5 l4 -11" fill="none" stroke="#0000ff" stroke-width="0.95" shape-rendering="auto"/><path d="M858.5 66 V80" fill="none" stroke="#000" stroke-width="1" shape-rendering="auto" stroke-dasharray="1 1" style="shape-rendering:crispEdges"/>
<path d="M871 80 L886 66" fill="none" stroke="#0000ff" stroke-width="0.95" shape-rendering="auto"/><path d="M877.5 66 V80" fill="none" stroke="#000" stroke-width="1" shape-rendering="auto" stroke-dasharray="1 1" style="shape-rendering:crispEdges"/>
<path d="M893 78 q3 -10 7 -11 q4 0 6 8 M897 79 q3 -8 6 -8 q3 0 6 8" fill="none" stroke="#0000ff" stroke-width="0.95" shape-rendering="auto"/><path d="M900.5 67 V80" fill="none" stroke="#000" stroke-width="1" shape-rendering="auto" stroke-dasharray="1 1" style="shape-rendering:crispEdges"/>
<path d="M916 67 q3 10 7 11 q4 0 6 -8 M920 66 q3 8 5 9 q3 0 7 -9" fill="none" stroke="#0000ff" stroke-width="0.95" shape-rendering="auto"/><path d="M923.5 66 V78" fill="none" stroke="#000" stroke-width="1" shape-rendering="auto" stroke-dasharray="1 1" style="shape-rendering:crispEdges"/>
<path d="M939 67 q4 2 7.5 2 q4 0 8 -3 M939 71 q4 3 7.5 3 q4 0 8 -3 M940 75 q4 4 6.5 4 q4 0 7 -4" fill="none" stroke="#0000ff" stroke-width="0.95" shape-rendering="auto"/><path d="M946.5 64 V78" fill="none" stroke="#000" stroke-width="1" shape-rendering="auto" stroke-dasharray="1 1" style="shape-rendering:crispEdges"/><polygon points="944,77 946.5,74 949,77 946.5,80" fill="#0000ff" shape-rendering="auto"/>
<path d="M962 73 q4 -4 8 -4 q4 0 8 4 M962 77 q4 -4 8 -4 q4 0 8 4 M962 80 q4 -3 8 -3 q4 0 8 3" fill="none" stroke="#0000ff" stroke-width="0.95" shape-rendering="auto"/><path d="M970.5 64 V80" fill="none" stroke="#000" stroke-width="1" shape-rendering="auto" stroke-dasharray="1 1" style="shape-rendering:crispEdges"/><circle cx="970.5" cy="68.5" r="2" fill="#0000ff" stroke="#0000ff" stroke-width="1" shape-rendering="auto"/>
<rect x="984" y="64" width="1" height="17" fill="#a0a0a0"/><rect x="985" y="64" width="1" height="17" fill="#fff"/>
<rect x="992" y="72" width="11" height="8" fill="url(#hatchy)"/><rect x="991.5" y="72.5" width="11" height="7" fill="none" stroke="#000" stroke-width="1"/><polygon points="1003,72 1007,68 1007,76 1003,80" fill="url(#hatchy)" stroke="#000" stroke-width="1" shape-rendering="auto"/><rect x="995" y="74" width="5" height="1" fill="#000"/><rect x="996" y="75" width="3" height="2" fill="#000"/><polygon points="990,71 993.5,66 997,71" fill="#fff" stroke="#0000c0" shape-rendering="auto"/><rect x="992" y="69" width="3" height="2" fill="#0000ff"/><rect x="997" y="65" width="4" height="7" fill="#ff0000"/><polygon points="998,66 1000.5,68.5 998,71" fill="#fff" shape-rendering="auto"/><path d="M1001.5 68 L1006 68" fill="none" stroke="#000" stroke-width="1" shape-rendering="auto"/>
<rect x="1014" y="71" width="7" height="1" fill="#000"/><rect x="1015" y="72" width="5" height="1" fill="#000"/><rect x="1016" y="73" width="3" height="1" fill="#000"/><rect x="1017" y="74" width="1" height="1" fill="#000"/>
<rect x="1027" y="64" width="1" height="17" fill="#a0a0a0"/><rect x="1028" y="64" width="1" height="17" fill="#fff"/>
<rect x="1033.6" y="65.6" width="14.8" height="13.8" fill="none" stroke="#000" stroke-width="1.2"/><rect x="1035" y="67" width="3" height="1" fill="#000"/><rect x="1040" y="67" width="3" height="1" fill="#000"/><rect x="1044" y="67" width="3" height="1" fill="#000"/><rect x="1035" y="69" width="3" height="1" fill="#000"/><rect x="1040" y="69" width="3" height="1" fill="#000"/><rect x="1044" y="69" width="3" height="1" fill="#000"/><rect x="1035" y="71" width="3" height="1" fill="#000"/><rect x="1040" y="71" width="3" height="1" fill="#000"/><rect x="1044" y="71" width="3" height="1" fill="#000"/><rect x="1035" y="73" width="3" height="1" fill="#000"/><rect x="1040" y="73" width="3" height="1" fill="#000"/><rect x="1044" y="73" width="3" height="1" fill="#000"/><rect x="1035" y="75" width="3" height="1" fill="#000"/><rect x="1040" y="75" width="3" height="1" fill="#000"/><rect x="1044" y="75" width="3" height="1" fill="#000"/><rect x="1035" y="77" width="3" height="1" fill="#000"/><rect x="1040" y="77" width="3" height="1" fill="#000"/><rect x="1044" y="77" width="3" height="1" fill="#000"/>
<rect x="1055" y="64" width="1" height="17" fill="#a0a0a0"/><rect x="1056" y="64" width="1" height="17" fill="#fff"/>
<text x="1061" y="79.5" font-family="'Liberation Sans',sans-serif" font-size="19.5px" font-weight="normal" fill="#000" text-anchor="start" textLength="16.5" lengthAdjust="spacingAndGlyphs" stroke="#000" stroke-width="0.45">'P'</text>
<rect x="1083" y="64" width="1" height="17" fill="#a0a0a0"/><rect x="1084" y="64" width="1" height="17" fill="#fff"/>
<rect x="1086" y="62" width="23" height="21" fill="url(#hatch)"/><rect x="1086" y="62" width="23" height="1" fill="#a0a0a0"/><rect x="1086" y="62" width="1" height="21" fill="#a0a0a0"/><rect x="1086" y="82" width="23" height="1" fill="#fff"/><rect x="1108" y="62" width="1" height="21" fill="#fff"/>
<text x="1090" y="71.6" font-family="'Liberation Sans',sans-serif" font-size="10.5px" font-weight="bold" fill="#900000" text-anchor="start">x</text><rect x="1098" y="71" width="1" height="8" fill="#000"/><polygon points="1095.3,80 1101.7,80 1098.5,76.5" fill="#000" shape-rendering="auto"/><path d="M1092.5 76 Q1098.5 69.5 1104.5 76" fill="none" stroke="#000" stroke-width="1" shape-rendering="auto"/><rect x="1090" y="76" width="5" height="1" fill="#e8d800"/><rect x="1091" y="77" width="3" height="1" fill="#000"/><rect x="1092" y="76" width="1" height="1" fill="#000"/><rect x="1102" y="76" width="5" height="1" fill="#e8d800"/><rect x="1103" y="77" width="3" height="1" fill="#000"/><rect x="1104" y="76" width="1" height="1" fill="#000"/>
<rect x="1109" y="62" width="23" height="21" fill="url(#hatch)"/><rect x="1109" y="62" width="23" height="1" fill="#a0a0a0"/><rect x="1109" y="62" width="1" height="21" fill="#a0a0a0"/><rect x="1109" y="82" width="23" height="1" fill="#fff"/><rect x="1131" y="62" width="1" height="21" fill="#fff"/>
<text x="1113" y="71.6" font-family="'Liberation Sans',sans-serif" font-size="8.6px" font-weight="bold" fill="#900000" text-anchor="start">Y</text><rect x="1121" y="71" width="1" height="8" fill="#000"/><polygon points="1118.3,80 1124.7,80 1121.5,76.5" fill="#000" shape-rendering="auto"/><path d="M1115.5 76 Q1121.5 69.5 1127.5 76" fill="none" stroke="#000" stroke-width="1" shape-rendering="auto"/><rect x="1113" y="76" width="5" height="1" fill="#e8d800"/><rect x="1114" y="77" width="3" height="1" fill="#000"/><rect x="1115" y="76" width="1" height="1" fill="#000"/><rect x="1125" y="76" width="5" height="1" fill="#e8d800"/><rect x="1126" y="77" width="3" height="1" fill="#000"/><rect x="1127" y="76" width="1" height="1" fill="#000"/>
<rect x="1134" y="64" width="1" height="17" fill="#a0a0a0"/><rect x="1135" y="64" width="1" height="17" fill="#fff"/>
<circle cx="1147" cy="71" r="5.1" fill="#fff" stroke="#000" stroke-width="1.25" shape-rendering="auto"/><path d="M1151 75 L1155.6 79.4" fill="none" stroke="#000" stroke-width="2.2" shape-rendering="auto"/><path d="M1143.4 69.6 A3.8 3.8 0 0 1 1145.6 67.4" fill="none" stroke="#00ffff" stroke-width="1" shape-rendering="auto"/><path d="M1150.6 72.4 A3.8 3.8 0 0 1 1148.4 74.6" fill="none" stroke="#00ffff" stroke-width="1" shape-rendering="auto"/><rect x="1144" y="70" width="6" height="2" fill="#000"/><rect x="1146" y="68" width="2" height="6" fill="#000"/>
<circle cx="1170" cy="71" r="5.1" fill="#fff" stroke="#000" stroke-width="1.25" shape-rendering="auto"/><path d="M1174 75 L1178.6 79.4" fill="none" stroke="#000" stroke-width="2.2" shape-rendering="auto"/><path d="M1166.4 69.6 A3.8 3.8 0 0 1 1168.6 67.4" fill="none" stroke="#00ffff" stroke-width="1" shape-rendering="auto"/><path d="M1173.6 72.4 A3.8 3.8 0 0 1 1171.4 74.6" fill="none" stroke="#00ffff" stroke-width="1" shape-rendering="auto"/><rect x="1167" y="70" width="6" height="2" fill="#000"/>
<circle cx="1193" cy="71" r="5.1" fill="#fff" stroke="#000" stroke-width="1.25" shape-rendering="auto"/><path d="M1197 75 L1201.6 79.4" fill="none" stroke="#000" stroke-width="2.2" shape-rendering="auto"/><path d="M1189.4 69.6 A3.8 3.8 0 0 1 1191.6 67.4" fill="none" stroke="#00ffff" stroke-width="1" shape-rendering="auto"/><path d="M1196.6 72.4 A3.8 3.8 0 0 1 1194.4 74.6" fill="none" stroke="#00ffff" stroke-width="1" shape-rendering="auto"/><rect x="1189.5" y="68.5" width="8" height="4" fill="#fff" stroke="#0000a0" stroke-width="1"/><polyline points="1190.5,71.5 1192.5,69.5 1193.5,71.5 1195.5,69.5 1196.5,71.5" fill="none" stroke="#ff0000" stroke-width="1" shape-rendering="auto"/>
<rect x="1208" y="64" width="1" height="17" fill="#a0a0a0"/><rect x="1209" y="64" width="1" height="17" fill="#fff"/>
<circle cx="615" cy="98" r="6.3" fill="url(#hatchg)" shape-rendering="crispEdges"/><circle cx="613.5" cy="96.5" r="4.2" fill="#e6e6e6" stroke="#a0a0a0" stroke-width="1" shape-rendering="auto"/><path d="M609.5 96.5 H617.5 M613.5 92.5 V100.5" fill="none" stroke="#a0a0a0" stroke-width="1" shape-rendering="auto"/>
<text x="637.5" y="105" font-family="'Liberation Serif',sans-serif" font-size="20.4px" font-weight="normal" fill="#000" text-anchor="middle" textLength="13.4" lengthAdjust="spacingAndGlyphs" stroke="#000" stroke-width="0.55">F</text>
</svg>
<svg width="1252" height="615" style="font-family:'Liberation Sans',sans-serif;font-size:12px">
<text x="86.6" y="599.5" textLength="26.200000000000003" lengthAdjust="spacingAndGlyphs" font-weight="bold">Main</text>
<text x="124.6" y="599.5" textLength="19.400000000000006" lengthAdjust="spacingAndGlyphs" >Text</text>
<text x="159" y="599.5" textLength="33.400000000000006" lengthAdjust="spacingAndGlyphs" >Models</text>
<text x="212" y="599.5" textLength="72.39999999999998" lengthAdjust="spacingAndGlyphs" >Power Supplies</text>
<text x="303.2" y="599.5" textLength="17.19999999999999" lengthAdjust="spacingAndGlyphs" >Info</text>
<text x="698.4" y="598.5" textLength="25.8" lengthAdjust="spacingAndGlyphs" font-weight="bold">Main</text>
</svg>
</body></html>
